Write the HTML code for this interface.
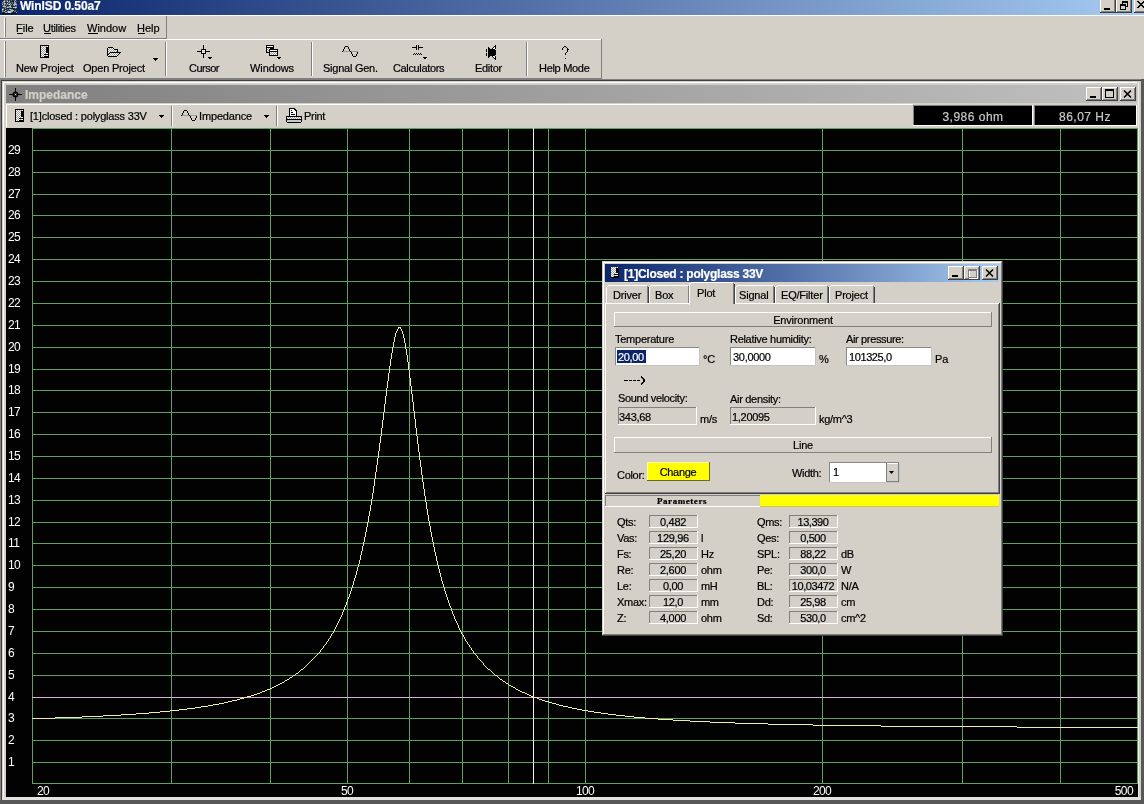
<!DOCTYPE html>
<html><head><meta charset="utf-8"><style>
html,body{margin:0;padding:0;}
body{width:1144px;height:804px;overflow:hidden;position:relative;background:#D4D0C8;font-family:"Liberation Sans",sans-serif;}
div,span{position:absolute;box-sizing:border-box;}
span{white-space:nowrap;line-height:20px;-webkit-text-stroke:0.2px currentColor;}
#root{left:0;top:0;width:1144px;height:804px;overflow:hidden;background:#D4D0C8;will-change:transform;}
</style></head><body><div id="root">
<div style="left:0px;top:0px;width:1144px;height:15px;background:linear-gradient(to right,#0A246A,#A6CAF0);"></div><svg style="position:absolute;left:2px;top:0px;" width="15" height="14" viewBox="0 0 15 14" shape-rendering="crispEdges"><rect x="0" y="0" width="1" height="1" fill="#1C2838"/><rect x="1" y="0" width="1" height="1" fill="#1C2838"/><rect x="2" y="0" width="1" height="1" fill="#9AAAB4"/><rect x="3" y="0" width="1" height="1" fill="#1C2838"/><rect x="4" y="0" width="1" height="1" fill="#5A6A78"/><rect x="5" y="0" width="1" height="1" fill="#5A6A78"/><rect x="6" y="0" width="1" height="1" fill="#1C2838"/><rect x="7" y="0" width="1" height="1" fill="#5A6A78"/><rect x="8" y="0" width="1" height="1" fill="#1C2838"/><rect x="9" y="0" width="1" height="1" fill="#5A6A78"/><rect x="10" y="0" width="1" height="1" fill="#1C2838"/><rect x="11" y="0" width="1" height="1" fill="#1C2838"/><rect x="12" y="0" width="1" height="1" fill="#5A6A78"/><rect x="13" y="0" width="1" height="1" fill="#9AAAB4"/><rect x="14" y="0" width="1" height="1" fill="#1C2838"/><rect x="0" y="1" width="1" height="1" fill="#1C2838"/><rect x="1" y="1" width="1" height="1" fill="#9AAAB4"/><rect x="2" y="1" width="1" height="1" fill="#C8D4DA"/><rect x="3" y="1" width="1" height="1" fill="#5A6A78"/><rect x="4" y="1" width="1" height="1" fill="#5A6A78"/><rect x="5" y="1" width="1" height="1" fill="#C8D4DA"/><rect x="6" y="1" width="1" height="1" fill="#1C2838"/><rect x="7" y="1" width="1" height="1" fill="#C8D4DA"/><rect x="8" y="1" width="1" height="1" fill="#1C2838"/><rect x="9" y="1" width="1" height="1" fill="#1C2838"/><rect x="10" y="1" width="1" height="1" fill="#1C2838"/><rect x="11" y="1" width="1" height="1" fill="#1C2838"/><rect x="12" y="1" width="1" height="1" fill="#9AAAB4"/><rect x="13" y="1" width="1" height="1" fill="#1C2838"/><rect x="14" y="1" width="1" height="1" fill="#5A6A78"/><rect x="0" y="2" width="1" height="1" fill="#9AAAB4"/><rect x="1" y="2" width="1" height="1" fill="#5A6A78"/><rect x="2" y="2" width="1" height="1" fill="#5A6A78"/><rect x="3" y="2" width="1" height="1" fill="#1C2838"/><rect x="4" y="2" width="1" height="1" fill="#1C2838"/><rect x="5" y="2" width="1" height="1" fill="#1C2838"/><rect x="6" y="2" width="1" height="1" fill="#9AAAB4"/><rect x="7" y="2" width="1" height="1" fill="#5A6A78"/><rect x="8" y="2" width="1" height="1" fill="#1C2838"/><rect x="9" y="2" width="1" height="1" fill="#5A6A78"/><rect x="10" y="2" width="1" height="1" fill="#5A6A78"/><rect x="11" y="2" width="1" height="1" fill="#1C2838"/><rect x="12" y="2" width="1" height="1" fill="#9AAAB4"/><rect x="13" y="2" width="1" height="1" fill="#9AAAB4"/><rect x="14" y="2" width="1" height="1" fill="#1C2838"/><rect x="0" y="3" width="1" height="1" fill="#5A6A78"/><rect x="1" y="3" width="1" height="1" fill="#5A6A78"/><rect x="2" y="3" width="1" height="1" fill="#C8D4DA"/><rect x="3" y="3" width="1" height="1" fill="#9AAAB4"/><rect x="4" y="3" width="1" height="1" fill="#1C2838"/><rect x="5" y="3" width="1" height="1" fill="#C8D4DA"/><rect x="6" y="3" width="1" height="1" fill="#1C2838"/><rect x="7" y="3" width="1" height="1" fill="#5A6A78"/><rect x="8" y="3" width="1" height="1" fill="#9AAAB4"/><rect x="9" y="3" width="1" height="1" fill="#1C2838"/><rect x="10" y="3" width="1" height="1" fill="#5A6A78"/><rect x="11" y="3" width="1" height="1" fill="#1C2838"/><rect x="12" y="3" width="1" height="1" fill="#9AAAB4"/><rect x="13" y="3" width="1" height="1" fill="#9AAAB4"/><rect x="14" y="3" width="1" height="1" fill="#5A6A78"/><rect x="0" y="4" width="1" height="1" fill="#C8D4DA"/><rect x="1" y="4" width="1" height="1" fill="#1C2838"/><rect x="2" y="4" width="1" height="1" fill="#9AAAB4"/><rect x="3" y="4" width="1" height="1" fill="#5A6A78"/><rect x="4" y="4" width="1" height="1" fill="#5A6A78"/><rect x="5" y="4" width="1" height="1" fill="#5A6A78"/><rect x="6" y="4" width="1" height="1" fill="#9AAAB4"/><rect x="7" y="4" width="1" height="1" fill="#C8D4DA"/><rect x="8" y="4" width="1" height="1" fill="#5A6A78"/><rect x="9" y="4" width="1" height="1" fill="#9AAAB4"/><rect x="10" y="4" width="1" height="1" fill="#1C2838"/><rect x="11" y="4" width="1" height="1" fill="#9AAAB4"/><rect x="12" y="4" width="1" height="1" fill="#9AAAB4"/><rect x="13" y="4" width="1" height="1" fill="#C8D4DA"/><rect x="14" y="4" width="1" height="1" fill="#9AAAB4"/><rect x="0" y="5" width="1" height="1" fill="#1C2838"/><rect x="1" y="5" width="1" height="1" fill="#5A6A78"/><rect x="2" y="5" width="1" height="1" fill="#9AAAB4"/><rect x="3" y="5" width="1" height="1" fill="#1C2838"/><rect x="4" y="5" width="1" height="1" fill="#5A6A78"/><rect x="5" y="5" width="1" height="1" fill="#1C2838"/><rect x="6" y="5" width="1" height="1" fill="#1C2838"/><rect x="7" y="5" width="1" height="1" fill="#1C2838"/><rect x="8" y="5" width="1" height="1" fill="#9AAAB4"/><rect x="9" y="5" width="1" height="1" fill="#1C2838"/><rect x="10" y="5" width="1" height="1" fill="#1C2838"/><rect x="11" y="5" width="1" height="1" fill="#5A6A78"/><rect x="12" y="5" width="1" height="1" fill="#C8D4DA"/><rect x="13" y="5" width="1" height="1" fill="#1C2838"/><rect x="14" y="5" width="1" height="1" fill="#5A6A78"/><rect x="0" y="6" width="1" height="1" fill="#5A6A78"/><rect x="1" y="6" width="1" height="1" fill="#C8D4DA"/><rect x="2" y="6" width="1" height="1" fill="#9AAAB4"/><rect x="3" y="6" width="1" height="1" fill="#C8D4DA"/><rect x="4" y="6" width="1" height="1" fill="#1C2838"/><rect x="5" y="6" width="1" height="1" fill="#5A6A78"/><rect x="6" y="6" width="1" height="1" fill="#5A6A78"/><rect x="7" y="6" width="1" height="1" fill="#C8D4DA"/><rect x="8" y="6" width="1" height="1" fill="#C8D4DA"/><rect x="9" y="6" width="1" height="1" fill="#1C2838"/><rect x="10" y="6" width="1" height="1" fill="#1C2838"/><rect x="11" y="6" width="1" height="1" fill="#1C2838"/><rect x="12" y="6" width="1" height="1" fill="#1C2838"/><rect x="13" y="6" width="1" height="1" fill="#5A6A78"/><rect x="14" y="6" width="1" height="1" fill="#5A6A78"/><rect x="0" y="7" width="1" height="1" fill="#1C2838"/><rect x="1" y="7" width="1" height="1" fill="#1C2838"/><rect x="2" y="7" width="1" height="1" fill="#5A6A78"/><rect x="3" y="7" width="1" height="1" fill="#5A6A78"/><rect x="4" y="7" width="1" height="1" fill="#5A6A78"/><rect x="5" y="7" width="1" height="1" fill="#C8D4DA"/><rect x="6" y="7" width="1" height="1" fill="#9AAAB4"/><rect x="7" y="7" width="1" height="1" fill="#5A6A78"/><rect x="8" y="7" width="1" height="1" fill="#9AAAB4"/><rect x="9" y="7" width="1" height="1" fill="#9AAAB4"/><rect x="10" y="7" width="1" height="1" fill="#1C2838"/><rect x="11" y="7" width="1" height="1" fill="#C8D4DA"/><rect x="12" y="7" width="1" height="1" fill="#9AAAB4"/><rect x="13" y="7" width="1" height="1" fill="#C8D4DA"/><rect x="14" y="7" width="1" height="1" fill="#9AAAB4"/><rect x="0" y="8" width="1" height="1" fill="#5A6A78"/><rect x="1" y="8" width="1" height="1" fill="#5A6A78"/><rect x="2" y="8" width="1" height="1" fill="#1C2838"/><rect x="3" y="8" width="1" height="1" fill="#9AAAB4"/><rect x="4" y="8" width="1" height="1" fill="#1C2838"/><rect x="5" y="8" width="1" height="1" fill="#1C2838"/><rect x="6" y="8" width="1" height="1" fill="#1C2838"/><rect x="7" y="8" width="1" height="1" fill="#1C2838"/><rect x="8" y="8" width="1" height="1" fill="#1C2838"/><rect x="9" y="8" width="1" height="1" fill="#1C2838"/><rect x="10" y="8" width="1" height="1" fill="#1C2838"/><rect x="11" y="8" width="1" height="1" fill="#1C2838"/><rect x="12" y="8" width="1" height="1" fill="#1C2838"/><rect x="13" y="8" width="1" height="1" fill="#5A6A78"/><rect x="14" y="8" width="1" height="1" fill="#1C2838"/><rect x="0" y="9" width="1" height="1" fill="#C8D4DA"/><rect x="1" y="9" width="1" height="1" fill="#9AAAB4"/><rect x="2" y="9" width="1" height="1" fill="#1C2838"/><rect x="3" y="9" width="1" height="1" fill="#1C2838"/><rect x="4" y="9" width="1" height="1" fill="#1C2838"/><rect x="5" y="9" width="1" height="1" fill="#5A6A78"/><rect x="6" y="9" width="1" height="1" fill="#1C2838"/><rect x="7" y="9" width="1" height="1" fill="#9AAAB4"/><rect x="8" y="9" width="1" height="1" fill="#C8D4DA"/><rect x="9" y="9" width="1" height="1" fill="#5A6A78"/><rect x="10" y="9" width="1" height="1" fill="#5A6A78"/><rect x="11" y="9" width="1" height="1" fill="#1C2838"/><rect x="12" y="9" width="1" height="1" fill="#1C2838"/><rect x="13" y="9" width="1" height="1" fill="#1C2838"/><rect x="14" y="9" width="1" height="1" fill="#1C2838"/><rect x="0" y="10" width="1" height="1" fill="#9AAAB4"/><rect x="1" y="10" width="1" height="1" fill="#1C2838"/><rect x="2" y="10" width="1" height="1" fill="#1C2838"/><rect x="3" y="10" width="1" height="1" fill="#C8D4DA"/><rect x="4" y="10" width="1" height="1" fill="#5A6A78"/><rect x="5" y="10" width="1" height="1" fill="#1C2838"/><rect x="6" y="10" width="1" height="1" fill="#5A6A78"/><rect x="7" y="10" width="1" height="1" fill="#1C2838"/><rect x="8" y="10" width="1" height="1" fill="#5A6A78"/><rect x="9" y="10" width="1" height="1" fill="#C8D4DA"/><rect x="10" y="10" width="1" height="1" fill="#C8D4DA"/><rect x="11" y="10" width="1" height="1" fill="#9AAAB4"/><rect x="12" y="10" width="1" height="1" fill="#1C2838"/><rect x="13" y="10" width="1" height="1" fill="#5A6A78"/><rect x="14" y="10" width="1" height="1" fill="#1C2838"/><rect x="0" y="11" width="1" height="1" fill="#9AAAB4"/><rect x="1" y="11" width="1" height="1" fill="#5A6A78"/><rect x="2" y="11" width="1" height="1" fill="#9AAAB4"/><rect x="3" y="11" width="1" height="1" fill="#1C2838"/><rect x="4" y="11" width="1" height="1" fill="#1C2838"/><rect x="5" y="11" width="1" height="1" fill="#9AAAB4"/><rect x="6" y="11" width="1" height="1" fill="#C8D4DA"/><rect x="7" y="11" width="1" height="1" fill="#C8D4DA"/><rect x="8" y="11" width="1" height="1" fill="#9AAAB4"/><rect x="9" y="11" width="1" height="1" fill="#9AAAB4"/><rect x="10" y="11" width="1" height="1" fill="#9AAAB4"/><rect x="11" y="11" width="1" height="1" fill="#1C2838"/><rect x="12" y="11" width="1" height="1" fill="#5A6A78"/><rect x="13" y="11" width="1" height="1" fill="#5A6A78"/><rect x="14" y="11" width="1" height="1" fill="#1C2838"/><rect x="0" y="12" width="1" height="1" fill="#1C2838"/><rect x="1" y="12" width="1" height="1" fill="#1C2838"/><rect x="2" y="12" width="1" height="1" fill="#1C2838"/><rect x="3" y="12" width="1" height="1" fill="#9AAAB4"/><rect x="4" y="12" width="1" height="1" fill="#C8D4DA"/><rect x="5" y="12" width="1" height="1" fill="#5A6A78"/><rect x="6" y="12" width="1" height="1" fill="#C8D4DA"/><rect x="7" y="12" width="1" height="1" fill="#C8D4DA"/><rect x="8" y="12" width="1" height="1" fill="#C8D4DA"/><rect x="9" y="12" width="1" height="1" fill="#5A6A78"/><rect x="10" y="12" width="1" height="1" fill="#1C2838"/><rect x="11" y="12" width="1" height="1" fill="#1C2838"/><rect x="12" y="12" width="1" height="1" fill="#1C2838"/><rect x="13" y="12" width="1" height="1" fill="#1C2838"/><rect x="14" y="12" width="1" height="1" fill="#9AAAB4"/><rect x="0" y="13" width="1" height="1" fill="#C8D4DA"/><rect x="1" y="13" width="1" height="1" fill="#9AAAB4"/><rect x="2" y="13" width="1" height="1" fill="#5A6A78"/><rect x="3" y="13" width="1" height="1" fill="#9AAAB4"/><rect x="4" y="13" width="1" height="1" fill="#9AAAB4"/><rect x="5" y="13" width="1" height="1" fill="#1C2838"/><rect x="6" y="13" width="1" height="1" fill="#9AAAB4"/><rect x="7" y="13" width="1" height="1" fill="#C8D4DA"/><rect x="8" y="13" width="1" height="1" fill="#9AAAB4"/><rect x="9" y="13" width="1" height="1" fill="#9AAAB4"/><rect x="10" y="13" width="1" height="1" fill="#5A6A78"/><rect x="11" y="13" width="1" height="1" fill="#1C2838"/><rect x="12" y="13" width="1" height="1" fill="#9AAAB4"/><rect x="13" y="13" width="1" height="1" fill="#1C2838"/><rect x="14" y="13" width="1" height="1" fill="#9AAAB4"/><rect x="0" y="13" width="15" height="1" fill="#101018"/></svg><span style="left:20px;top:-4px;font-size:12px;font-weight:bold;color:#fff;letter-spacing:-0.1px;">WinISD 0.50a7</span><div style="left:1100px;top:-2px;width:16px;height:15px;background:#D4D0C8;"></div><div style="left:1100px;top:-2px;width:15px;height:1px;background:#FFFFFF;"></div><div style="left:1100px;top:-2px;width:1px;height:14px;background:#FFFFFF;"></div><div style="left:1101px;top:11px;width:14px;height:1px;background:#808080;"></div><div style="left:1114px;top:-2px;width:1px;height:14px;background:#808080;"></div><div style="left:1100px;top:12px;width:16px;height:1px;background:#404040;"></div><div style="left:1115px;top:-2px;width:1px;height:15px;background:#404040;"></div><div style="left:1104px;top:8px;width:6px;height:2px;background:#000;"></div><div style="left:1116px;top:-2px;width:16px;height:15px;background:#D4D0C8;"></div><div style="left:1116px;top:-2px;width:15px;height:1px;background:#FFFFFF;"></div><div style="left:1116px;top:-2px;width:1px;height:14px;background:#FFFFFF;"></div><div style="left:1117px;top:11px;width:14px;height:1px;background:#808080;"></div><div style="left:1130px;top:-2px;width:1px;height:14px;background:#808080;"></div><div style="left:1116px;top:12px;width:16px;height:1px;background:#404040;"></div><div style="left:1131px;top:-2px;width:1px;height:15px;background:#404040;"></div><svg style="position:absolute;left:1120px;top:1px;" width="8" height="9" viewBox="0 0 8 9" shape-rendering="crispEdges"><rect x="2" y="0" width="6" height="1" fill="#000"/><rect x="2" y="1" width="6" height="1" fill="#000"/><rect x="2" y="2" width="1" height="1" fill="#000"/><rect x="7" y="2" width="1" height="1" fill="#000"/><rect x="0" y="3" width="6" height="1" fill="#000"/><rect x="7" y="3" width="1" height="1" fill="#000"/><rect x="0" y="4" width="6" height="1" fill="#000"/><rect x="7" y="4" width="1" height="1" fill="#000"/><rect x="0" y="5" width="1" height="1" fill="#000"/><rect x="5" y="5" width="3" height="1" fill="#000"/><rect x="0" y="6" width="1" height="1" fill="#000"/><rect x="5" y="6" width="1" height="1" fill="#000"/><rect x="0" y="7" width="1" height="1" fill="#000"/><rect x="5" y="7" width="1" height="1" fill="#000"/><rect x="0" y="8" width="6" height="1" fill="#000"/></svg><div style="left:1134px;top:-2px;width:16px;height:15px;background:#D4D0C8;"></div><div style="left:1134px;top:-2px;width:15px;height:1px;background:#FFFFFF;"></div><div style="left:1134px;top:-2px;width:1px;height:14px;background:#FFFFFF;"></div><div style="left:1135px;top:11px;width:14px;height:1px;background:#808080;"></div><div style="left:1148px;top:-2px;width:1px;height:14px;background:#808080;"></div><div style="left:1134px;top:12px;width:16px;height:1px;background:#404040;"></div><div style="left:1149px;top:-2px;width:1px;height:15px;background:#404040;"></div><svg style="position:absolute;left:1137px;top:1px;" width="8" height="7" viewBox="0 0 8 7" shape-rendering="crispEdges"><rect x="0" y="0" width="2" height="1" fill="#000"/><rect x="6" y="0" width="2" height="1" fill="#000"/><rect x="1" y="1" width="2" height="1" fill="#000"/><rect x="5" y="1" width="2" height="1" fill="#000"/><rect x="2" y="2" width="4" height="1" fill="#000"/><rect x="3" y="3" width="2" height="1" fill="#000"/><rect x="2" y="4" width="4" height="1" fill="#000"/><rect x="1" y="5" width="2" height="1" fill="#000"/><rect x="5" y="5" width="2" height="1" fill="#000"/><rect x="0" y="6" width="2" height="1" fill="#000"/><rect x="6" y="6" width="2" height="1" fill="#000"/></svg><div style="left:0px;top:15px;width:1144px;height:1px;background:#FFFFFF;"></div><div style="left:0px;top:38px;width:167px;height:1px;background:#808080;"></div><div style="left:166px;top:16px;width:1px;height:23px;background:#808080;"></div><div style="left:4px;top:18px;width:1px;height:19px;background:#FFFFFF;"></div><div style="left:5px;top:18px;width:1px;height:19px;background:#808080;"></div><span style="left:16px;top:18px;font-size:11px;font-weight:normal;color:#000;">File</span><div style="left:17px;top:33px;width:6px;height:1px;background:#000;"></div><span style="left:43px;top:18px;font-size:11px;font-weight:normal;color:#000;letter-spacing:-0.3px;">Utilities</span><div style="left:44px;top:33px;width:7px;height:1px;background:#000;"></div><span style="left:87px;top:18px;font-size:11px;font-weight:normal;color:#000;">Window</span><div style="left:88px;top:33px;width:10px;height:1px;background:#000;"></div><span style="left:137px;top:18px;font-size:11px;font-weight:normal;color:#000;">Help</span><div style="left:138px;top:33px;width:7px;height:1px;background:#000;"></div><div style="left:0px;top:39px;width:602px;height:1px;background:#FFFFFF;"></div><div style="left:0px;top:78px;width:602px;height:1px;background:#808080;"></div><div style="left:601px;top:39px;width:1px;height:40px;background:#808080;"></div><div style="left:4px;top:41px;width:1px;height:36px;background:#FFFFFF;"></div><div style="left:5px;top:41px;width:1px;height:36px;background:#808080;"></div><div style="left:165px;top:42px;width:1px;height:34px;background:#808080;"></div><div style="left:166px;top:42px;width:1px;height:34px;background:#FFFFFF;"></div><div style="left:311px;top:42px;width:1px;height:34px;background:#808080;"></div><div style="left:312px;top:42px;width:1px;height:34px;background:#FFFFFF;"></div><div style="left:526px;top:42px;width:1px;height:34px;background:#808080;"></div><div style="left:527px;top:42px;width:1px;height:34px;background:#FFFFFF;"></div><span style="left:16px;top:58px;font-size:11px;font-weight:normal;color:#000;letter-spacing:-0.15px;">New Project</span><span style="left:83px;top:58px;font-size:11px;font-weight:normal;color:#000;letter-spacing:-0.2px;">Open Project</span><span style="left:189px;top:58px;font-size:11px;font-weight:normal;color:#000;letter-spacing:-0.5px;">Cursor</span><span style="left:250px;top:58px;font-size:11px;font-weight:normal;color:#000;letter-spacing:-0.1px;">Windows</span><span style="left:323px;top:58px;font-size:11px;font-weight:normal;color:#000;letter-spacing:-0.25px;">Signal Gen.</span><span style="left:393px;top:58px;font-size:11px;font-weight:normal;color:#000;letter-spacing:-0.35px;">Calculators</span><span style="left:475px;top:58px;font-size:11px;font-weight:normal;color:#000;letter-spacing:-0.3px;">Editor</span><span style="left:539px;top:58px;font-size:11px;font-weight:normal;color:#000;letter-spacing:-0.3px;">Help Mode</span><svg style="position:absolute;left:153px;top:58px;" width="5" height="3" viewBox="0 0 5 3" shape-rendering="crispEdges"><rect x="0" y="0" width="5" height="1" fill="#000"/><rect x="1" y="1" width="3" height="1" fill="#000"/><rect x="2" y="2" width="1" height="1" fill="#000"/></svg><svg style="position:absolute;left:40px;top:45px;" width="9" height="13" viewBox="0 0 9 13" shape-rendering="crispEdges"><rect x="0" y="0" width="9" height="1" fill="#000"/><rect x="0" y="1" width="1" height="1" fill="#000"/><rect x="1" y="1" width="1" height="1" fill="#FFFFFF"/><rect x="2" y="1" width="1" height="1" fill="#9C9C9C"/><rect x="3" y="1" width="1" height="1" fill="#FFFFFF"/><rect x="4" y="1" width="1" height="1" fill="#9C9C9C"/><rect x="5" y="1" width="1" height="1" fill="#FFFFFF"/><rect x="6" y="1" width="1" height="1" fill="#9C9C9C"/><rect x="7" y="1" width="1" height="1" fill="#FFFFFF"/><rect x="8" y="1" width="1" height="1" fill="#000"/><rect x="0" y="2" width="1" height="1" fill="#000"/><rect x="1" y="2" width="1" height="1" fill="#9C9C9C"/><rect x="2" y="2" width="1" height="1" fill="#FFFFFF"/><rect x="3" y="2" width="1" height="1" fill="#9C9C9C"/><rect x="4" y="2" width="1" height="1" fill="#FFFFFF"/><rect x="5" y="2" width="1" height="1" fill="#9C9C9C"/><rect x="6" y="2" width="3" height="1" fill="#000"/><rect x="0" y="3" width="1" height="1" fill="#000"/><rect x="1" y="3" width="1" height="1" fill="#FFFFFF"/><rect x="2" y="3" width="1" height="1" fill="#9C9C9C"/><rect x="3" y="3" width="1" height="1" fill="#FFFFFF"/><rect x="4" y="3" width="1" height="1" fill="#9C9C9C"/><rect x="5" y="3" width="1" height="1" fill="#FFFFFF"/><rect x="6" y="3" width="3" height="1" fill="#000"/><rect x="0" y="4" width="1" height="1" fill="#000"/><rect x="1" y="4" width="1" height="1" fill="#9C9C9C"/><rect x="2" y="4" width="1" height="1" fill="#FFFFFF"/><rect x="3" y="4" width="1" height="1" fill="#9C9C9C"/><rect x="4" y="4" width="1" height="1" fill="#FFFFFF"/><rect x="5" y="4" width="1" height="1" fill="#9C9C9C"/><rect x="6" y="4" width="3" height="1" fill="#000"/><rect x="0" y="5" width="1" height="1" fill="#000"/><rect x="1" y="5" width="1" height="1" fill="#FFFFFF"/><rect x="2" y="5" width="1" height="1" fill="#9C9C9C"/><rect x="3" y="5" width="1" height="1" fill="#FFFFFF"/><rect x="4" y="5" width="1" height="1" fill="#9C9C9C"/><rect x="5" y="5" width="1" height="1" fill="#FFFFFF"/><rect x="6" y="5" width="3" height="1" fill="#000"/><rect x="0" y="6" width="1" height="1" fill="#000"/><rect x="1" y="6" width="1" height="1" fill="#9C9C9C"/><rect x="2" y="6" width="1" height="1" fill="#FFFFFF"/><rect x="3" y="6" width="1" height="1" fill="#9C9C9C"/><rect x="4" y="6" width="1" height="1" fill="#FFFFFF"/><rect x="5" y="6" width="1" height="1" fill="#9C9C9C"/><rect x="6" y="6" width="3" height="1" fill="#000"/><rect x="0" y="7" width="1" height="1" fill="#000"/><rect x="1" y="7" width="1" height="1" fill="#FFFFFF"/><rect x="2" y="7" width="1" height="1" fill="#9C9C9C"/><rect x="3" y="7" width="1" height="1" fill="#FFFFFF"/><rect x="4" y="7" width="1" height="1" fill="#9C9C9C"/><rect x="5" y="7" width="1" height="1" fill="#FFFFFF"/><rect x="6" y="7" width="3" height="1" fill="#000"/><rect x="0" y="8" width="1" height="1" fill="#000"/><rect x="1" y="8" width="1" height="1" fill="#9C9C9C"/><rect x="2" y="8" width="1" height="1" fill="#FFFFFF"/><rect x="3" y="8" width="1" height="1" fill="#9C9C9C"/><rect x="4" y="8" width="1" height="1" fill="#FFFFFF"/><rect x="5" y="8" width="1" height="1" fill="#9C9C9C"/><rect x="6" y="8" width="2" height="1" fill="#FFFFFF"/><rect x="8" y="8" width="1" height="1" fill="#000"/><rect x="0" y="9" width="1" height="1" fill="#000"/><rect x="1" y="9" width="1" height="1" fill="#FFFFFF"/><rect x="2" y="9" width="1" height="1" fill="#9C9C9C"/><rect x="3" y="9" width="1" height="1" fill="#FFFFFF"/><rect x="4" y="9" width="5" height="1" fill="#000"/><rect x="0" y="10" width="1" height="1" fill="#000"/><rect x="1" y="10" width="1" height="1" fill="#9C9C9C"/><rect x="2" y="10" width="1" height="1" fill="#FFFFFF"/><rect x="3" y="10" width="1" height="1" fill="#9C9C9C"/><rect x="4" y="10" width="1" height="1" fill="#FFFFFF"/><rect x="5" y="10" width="1" height="1" fill="#9C9C9C"/><rect x="6" y="10" width="2" height="1" fill="#FFFFFF"/><rect x="8" y="10" width="1" height="1" fill="#000"/><rect x="0" y="11" width="1" height="1" fill="#000"/><rect x="1" y="11" width="1" height="1" fill="#FFFFFF"/><rect x="2" y="11" width="1" height="1" fill="#9C9C9C"/><rect x="3" y="11" width="1" height="1" fill="#FFFFFF"/><rect x="4" y="11" width="5" height="1" fill="#000"/><rect x="0" y="12" width="9" height="1" fill="#000"/></svg><svg style="position:absolute;left:107px;top:47px;" width="14" height="10" viewBox="0 0 14 10" shape-rendering="crispEdges"><rect x="1" y="0" width="5" height="1" fill="#000"/><rect x="0" y="1" width="1" height="1" fill="#000"/><rect x="1" y="1" width="1" height="1" fill="#FFFFFF"/><rect x="2" y="1" width="1" height="1" fill="#9C9C9C"/><rect x="3" y="1" width="1" height="1" fill="#FFFFFF"/><rect x="4" y="1" width="1" height="1" fill="#9C9C9C"/><rect x="5" y="1" width="1" height="1" fill="#FFFFFF"/><rect x="6" y="1" width="1" height="1" fill="#000"/><rect x="0" y="2" width="1" height="1" fill="#000"/><rect x="1" y="2" width="1" height="1" fill="#9C9C9C"/><rect x="2" y="2" width="1" height="1" fill="#FFFFFF"/><rect x="3" y="2" width="1" height="1" fill="#9C9C9C"/><rect x="4" y="2" width="1" height="1" fill="#FFFFFF"/><rect x="5" y="2" width="1" height="1" fill="#9C9C9C"/><rect x="6" y="2" width="1" height="1" fill="#FFFFFF"/><rect x="7" y="2" width="4" height="1" fill="#000"/><rect x="0" y="3" width="1" height="1" fill="#000"/><rect x="1" y="3" width="1" height="1" fill="#FFFFFF"/><rect x="2" y="3" width="1" height="1" fill="#9C9C9C"/><rect x="3" y="3" width="1" height="1" fill="#FFFFFF"/><rect x="4" y="3" width="1" height="1" fill="#9C9C9C"/><rect x="5" y="3" width="1" height="1" fill="#FFFFFF"/><rect x="6" y="3" width="1" height="1" fill="#9C9C9C"/><rect x="7" y="3" width="1" height="1" fill="#FFFFFF"/><rect x="8" y="3" width="1" height="1" fill="#9C9C9C"/><rect x="9" y="3" width="1" height="1" fill="#FFFFFF"/><rect x="10" y="3" width="1" height="1" fill="#000"/><rect x="0" y="4" width="1" height="1" fill="#000"/><rect x="1" y="4" width="1" height="1" fill="#9C9C9C"/><rect x="2" y="4" width="1" height="1" fill="#FFFFFF"/><rect x="3" y="4" width="1" height="1" fill="#9C9C9C"/><rect x="4" y="4" width="1" height="1" fill="#FFFFFF"/><rect x="5" y="4" width="1" height="1" fill="#9C9C9C"/><rect x="6" y="4" width="1" height="1" fill="#FFFFFF"/><rect x="7" y="4" width="1" height="1" fill="#9C9C9C"/><rect x="8" y="4" width="1" height="1" fill="#FFFFFF"/><rect x="9" y="4" width="1" height="1" fill="#9C9C9C"/><rect x="10" y="4" width="1" height="1" fill="#000"/><rect x="0" y="5" width="1" height="1" fill="#000"/><rect x="1" y="5" width="1" height="1" fill="#FFFFFF"/><rect x="2" y="5" width="1" height="1" fill="#9C9C9C"/><rect x="3" y="5" width="11" height="1" fill="#000"/><rect x="0" y="6" width="1" height="1" fill="#000"/><rect x="1" y="6" width="1" height="1" fill="#9C9C9C"/><rect x="2" y="6" width="1" height="1" fill="#000"/><rect x="3" y="6" width="1" height="1" fill="#FFFFFF"/><rect x="4" y="6" width="1" height="1" fill="#9C9C9C"/><rect x="5" y="6" width="1" height="1" fill="#FFFFFF"/><rect x="6" y="6" width="1" height="1" fill="#9C9C9C"/><rect x="7" y="6" width="1" height="1" fill="#FFFFFF"/><rect x="8" y="6" width="1" height="1" fill="#9C9C9C"/><rect x="9" y="6" width="1" height="1" fill="#FFFFFF"/><rect x="10" y="6" width="1" height="1" fill="#9C9C9C"/><rect x="11" y="6" width="1" height="1" fill="#FFFFFF"/><rect x="12" y="6" width="1" height="1" fill="#000"/><rect x="0" y="7" width="2" height="1" fill="#000"/><rect x="2" y="7" width="1" height="1" fill="#FFFFFF"/><rect x="3" y="7" width="1" height="1" fill="#9C9C9C"/><rect x="4" y="7" width="1" height="1" fill="#FFFFFF"/><rect x="5" y="7" width="1" height="1" fill="#9C9C9C"/><rect x="6" y="7" width="1" height="1" fill="#FFFFFF"/><rect x="7" y="7" width="1" height="1" fill="#9C9C9C"/><rect x="8" y="7" width="1" height="1" fill="#FFFFFF"/><rect x="9" y="7" width="1" height="1" fill="#9C9C9C"/><rect x="10" y="7" width="1" height="1" fill="#FFFFFF"/><rect x="11" y="7" width="1" height="1" fill="#000"/><rect x="0" y="8" width="1" height="1" fill="#000"/><rect x="1" y="8" width="1" height="1" fill="#FFFFFF"/><rect x="2" y="8" width="1" height="1" fill="#9C9C9C"/><rect x="3" y="8" width="1" height="1" fill="#FFFFFF"/><rect x="4" y="8" width="1" height="1" fill="#9C9C9C"/><rect x="5" y="8" width="1" height="1" fill="#FFFFFF"/><rect x="6" y="8" width="1" height="1" fill="#9C9C9C"/><rect x="7" y="8" width="1" height="1" fill="#FFFFFF"/><rect x="8" y="8" width="1" height="1" fill="#9C9C9C"/><rect x="9" y="8" width="1" height="1" fill="#FFFFFF"/><rect x="10" y="8" width="1" height="1" fill="#000"/><rect x="1" y="9" width="9" height="1" fill="#000"/></svg><svg style="position:absolute;left:197px;top:45px;" width="13" height="13" viewBox="0 0 13 13" shape-rendering="crispEdges"><rect x="6" y="0" width="1" height="1" fill="#000"/><rect x="6" y="1" width="1" height="1" fill="#000"/><rect x="6" y="2" width="1" height="1" fill="#000"/><rect x="6" y="3" width="1" height="1" fill="#000"/><rect x="4" y="4" width="5" height="1" fill="#000"/><rect x="4" y="5" width="1" height="1" fill="#000"/><rect x="5" y="5" width="1" height="1" fill="#FFFFFF"/><rect x="7" y="5" width="1" height="1" fill="#FFFFFF"/><rect x="8" y="5" width="1" height="1" fill="#000"/><rect x="0" y="6" width="5" height="1" fill="#000"/><rect x="8" y="6" width="5" height="1" fill="#000"/><rect x="4" y="7" width="1" height="1" fill="#000"/><rect x="5" y="7" width="1" height="1" fill="#FFFFFF"/><rect x="7" y="7" width="1" height="1" fill="#FFFFFF"/><rect x="8" y="7" width="1" height="1" fill="#000"/><rect x="4" y="8" width="5" height="1" fill="#000"/><rect x="6" y="9" width="1" height="1" fill="#000"/><rect x="6" y="10" width="1" height="1" fill="#000"/><rect x="6" y="11" width="1" height="1" fill="#000"/><rect x="6" y="12" width="1" height="1" fill="#000"/></svg><svg style="position:absolute;left:208px;top:57px;" width="4" height="2" viewBox="0 0 4 2" shape-rendering="crispEdges"><rect x="0" y="0" width="4" height="1" fill="#000"/><rect x="1" y="1" width="2" height="1" fill="#000"/></svg><svg style="position:absolute;left:266px;top:45px;" width="12" height="11" viewBox="0 0 12 11" shape-rendering="crispEdges"><rect x="0" y="0" width="8" height="1" fill="#000"/><rect x="0" y="1" width="1" height="1" fill="#000"/><rect x="1" y="1" width="6" height="1" fill="#FFFFFF"/><rect x="7" y="1" width="1" height="1" fill="#000"/><rect x="0" y="2" width="8" height="1" fill="#000"/><rect x="0" y="3" width="1" height="1" fill="#000"/><rect x="1" y="3" width="1" height="1" fill="#FFFFFF"/><rect x="2" y="3" width="1" height="1" fill="#9C9C9C"/><rect x="3" y="3" width="1" height="1" fill="#FFFFFF"/><rect x="4" y="3" width="4" height="1" fill="#000"/><rect x="0" y="4" width="1" height="1" fill="#000"/><rect x="1" y="4" width="1" height="1" fill="#9C9C9C"/><rect x="2" y="4" width="1" height="1" fill="#FFFFFF"/><rect x="3" y="4" width="9" height="1" fill="#000"/><rect x="0" y="5" width="1" height="1" fill="#000"/><rect x="1" y="5" width="1" height="1" fill="#FFFFFF"/><rect x="2" y="5" width="1" height="1" fill="#9C9C9C"/><rect x="3" y="5" width="1" height="1" fill="#000"/><rect x="4" y="5" width="7" height="1" fill="#FFFFFF"/><rect x="11" y="5" width="1" height="1" fill="#000"/><rect x="0" y="6" width="1" height="1" fill="#000"/><rect x="1" y="6" width="1" height="1" fill="#9C9C9C"/><rect x="2" y="6" width="1" height="1" fill="#FFFFFF"/><rect x="3" y="6" width="9" height="1" fill="#000"/><rect x="0" y="7" width="4" height="1" fill="#000"/><rect x="4" y="7" width="1" height="1" fill="#FFFFFF"/><rect x="5" y="7" width="1" height="1" fill="#9C9C9C"/><rect x="6" y="7" width="1" height="1" fill="#FFFFFF"/><rect x="7" y="7" width="1" height="1" fill="#9C9C9C"/><rect x="8" y="7" width="1" height="1" fill="#FFFFFF"/><rect x="9" y="7" width="1" height="1" fill="#9C9C9C"/><rect x="10" y="7" width="1" height="1" fill="#FFFFFF"/><rect x="11" y="7" width="1" height="1" fill="#000"/><rect x="3" y="8" width="1" height="1" fill="#000"/><rect x="4" y="8" width="1" height="1" fill="#9C9C9C"/><rect x="5" y="8" width="1" height="1" fill="#FFFFFF"/><rect x="6" y="8" width="1" height="1" fill="#9C9C9C"/><rect x="7" y="8" width="1" height="1" fill="#FFFFFF"/><rect x="8" y="8" width="1" height="1" fill="#9C9C9C"/><rect x="9" y="8" width="1" height="1" fill="#FFFFFF"/><rect x="10" y="8" width="1" height="1" fill="#9C9C9C"/><rect x="11" y="8" width="1" height="1" fill="#000"/><rect x="3" y="9" width="1" height="1" fill="#000"/><rect x="4" y="9" width="1" height="1" fill="#FFFFFF"/><rect x="5" y="9" width="1" height="1" fill="#9C9C9C"/><rect x="6" y="9" width="1" height="1" fill="#FFFFFF"/><rect x="7" y="9" width="1" height="1" fill="#9C9C9C"/><rect x="8" y="9" width="1" height="1" fill="#FFFFFF"/><rect x="9" y="9" width="1" height="1" fill="#9C9C9C"/><rect x="10" y="9" width="1" height="1" fill="#FFFFFF"/><rect x="11" y="9" width="1" height="1" fill="#000"/><rect x="3" y="10" width="9" height="1" fill="#000"/></svg><svg style="position:absolute;left:277px;top:57px;" width="4" height="2" viewBox="0 0 4 2" shape-rendering="crispEdges"><rect x="0" y="0" width="4" height="1" fill="#000"/><rect x="1" y="1" width="2" height="1" fill="#000"/></svg><svg style="position:absolute;left:342px;top:46px;" width="16" height="11" viewBox="0 0 16 11" shape-rendering="crispEdges"><rect x="3" y="0" width="3" height="1" fill="#000"/><rect x="2" y="1" width="1" height="1" fill="#000"/><rect x="6" y="1" width="1" height="1" fill="#000"/><rect x="2" y="2" width="1" height="1" fill="#000"/><rect x="6" y="2" width="1" height="1" fill="#000"/><rect x="1" y="3" width="1" height="1" fill="#000"/><rect x="7" y="3" width="1" height="1" fill="#000"/><rect x="1" y="4" width="1" height="1" fill="#000"/><rect x="7" y="4" width="1" height="1" fill="#000"/><rect x="0" y="5" width="1" height="1" fill="#000"/><rect x="1" y="5" width="7" height="1" fill="#9C9C9C"/><rect x="8" y="5" width="1" height="1" fill="#000"/><rect x="9" y="5" width="7" height="1" fill="#9C9C9C"/><rect x="9" y="6" width="1" height="1" fill="#000"/><rect x="15" y="6" width="1" height="1" fill="#000"/><rect x="9" y="7" width="1" height="1" fill="#000"/><rect x="15" y="7" width="1" height="1" fill="#000"/><rect x="10" y="8" width="1" height="1" fill="#000"/><rect x="14" y="8" width="1" height="1" fill="#000"/><rect x="10" y="9" width="1" height="1" fill="#000"/><rect x="14" y="9" width="1" height="1" fill="#000"/><rect x="11" y="10" width="3" height="1" fill="#000"/></svg><svg style="position:absolute;left:412px;top:45px;" width="11" height="10" viewBox="0 0 11 10" shape-rendering="crispEdges"><rect x="4" y="0" width="1" height="1" fill="#000"/><rect x="6" y="0" width="1" height="1" fill="#000"/><rect x="4" y="1" width="1" height="1" fill="#000"/><rect x="6" y="1" width="1" height="1" fill="#000"/><rect x="0" y="2" width="5" height="1" fill="#000"/><rect x="6" y="2" width="5" height="1" fill="#000"/><rect x="4" y="3" width="1" height="1" fill="#000"/><rect x="6" y="3" width="1" height="1" fill="#000"/><rect x="4" y="4" width="1" height="1" fill="#000"/><rect x="6" y="4" width="1" height="1" fill="#000"/><rect x="2" y="8" width="1" height="1" fill="#000"/><rect x="4" y="8" width="1" height="1" fill="#000"/><rect x="6" y="8" width="1" height="1" fill="#000"/><rect x="8" y="8" width="1" height="1" fill="#000"/><rect x="1" y="9" width="1" height="1" fill="#000"/><rect x="3" y="9" width="1" height="1" fill="#000"/><rect x="5" y="9" width="1" height="1" fill="#000"/><rect x="7" y="9" width="1" height="1" fill="#000"/><rect x="9" y="9" width="1" height="1" fill="#000"/></svg><svg style="position:absolute;left:423px;top:57px;" width="4" height="2" viewBox="0 0 4 2" shape-rendering="crispEdges"><rect x="0" y="0" width="4" height="1" fill="#000"/><rect x="1" y="1" width="2" height="1" fill="#000"/></svg><svg style="position:absolute;left:486px;top:45px;" width="10" height="15" viewBox="0 0 10 15" shape-rendering="crispEdges"><rect x="9" y="0" width="1" height="1" fill="#000"/><rect x="8" y="1" width="2" height="1" fill="#000"/><rect x="2" y="2" width="1" height="1" fill="#000"/><rect x="7" y="2" width="1" height="1" fill="#000"/><rect x="8" y="2" width="1" height="1" fill="#FFFFFF"/><rect x="9" y="2" width="1" height="1" fill="#000"/><rect x="2" y="3" width="2" height="1" fill="#000"/><rect x="6" y="3" width="1" height="1" fill="#000"/><rect x="7" y="3" width="2" height="1" fill="#FFFFFF"/><rect x="9" y="3" width="1" height="1" fill="#000"/><rect x="0" y="4" width="1" height="1" fill="#000"/><rect x="2" y="4" width="7" height="1" fill="#000"/><rect x="0" y="5" width="1" height="1" fill="#000"/><rect x="2" y="5" width="8" height="1" fill="#000"/><rect x="0" y="6" width="1" height="1" fill="#000"/><rect x="2" y="6" width="8" height="1" fill="#000"/><rect x="2" y="7" width="8" height="1" fill="#000"/><rect x="0" y="8" width="1" height="1" fill="#000"/><rect x="2" y="8" width="8" height="1" fill="#000"/><rect x="0" y="9" width="1" height="1" fill="#000"/><rect x="2" y="9" width="8" height="1" fill="#000"/><rect x="0" y="10" width="1" height="1" fill="#000"/><rect x="2" y="10" width="7" height="1" fill="#000"/><rect x="2" y="11" width="2" height="1" fill="#000"/><rect x="6" y="11" width="1" height="1" fill="#000"/><rect x="7" y="11" width="2" height="1" fill="#FFFFFF"/><rect x="9" y="11" width="1" height="1" fill="#000"/><rect x="2" y="12" width="1" height="1" fill="#000"/><rect x="7" y="12" width="1" height="1" fill="#000"/><rect x="8" y="12" width="1" height="1" fill="#FFFFFF"/><rect x="9" y="12" width="1" height="1" fill="#000"/><rect x="8" y="13" width="2" height="1" fill="#000"/><rect x="9" y="14" width="1" height="1" fill="#000"/></svg><svg style="position:absolute;left:562px;top:46px;" width="7" height="13" viewBox="0 0 7 13" shape-rendering="crispEdges"><rect x="2" y="0" width="2" height="1" fill="#000"/><rect x="1" y="1" width="1" height="1" fill="#000"/><rect x="4" y="1" width="1" height="1" fill="#000"/><rect x="0" y="2" width="1" height="1" fill="#000"/><rect x="5" y="2" width="1" height="1" fill="#000"/><rect x="0" y="3" width="1" height="1" fill="#000"/><rect x="5" y="3" width="2" height="1" fill="#000"/><rect x="5" y="4" width="1" height="1" fill="#000"/><rect x="5" y="5" width="1" height="1" fill="#000"/><rect x="4" y="6" width="1" height="1" fill="#000"/><rect x="3" y="7" width="1" height="1" fill="#000"/><rect x="3" y="8" width="1" height="1" fill="#000"/><rect x="3" y="12" width="1" height="1" fill="#000"/></svg><div style="left:0px;top:79px;width:1144px;height:1px;background:#808080;"></div><div style="left:0px;top:80px;width:1144px;height:1px;background:#404040;"></div><div style="left:0px;top:79px;width:1px;height:725px;background:#808080;"></div><div style="left:1px;top:80px;width:1px;height:724px;background:#404040;"></div><div style="left:2px;top:81px;width:1139px;height:1px;background:#D4D0C8;"></div><div style="left:3px;top:82px;width:1137px;height:1px;background:#FFFFFF;"></div><div style="left:2px;top:83px;width:1139px;height:2px;background:#D4D0C8;"></div><div style="left:2px;top:81px;width:1px;height:723px;background:#D4D0C8;"></div><div style="left:3px;top:82px;width:1px;height:722px;background:#FFFFFF;"></div><div style="left:4px;top:83px;width:2px;height:721px;background:#D4D0C8;"></div><div style="left:1137px;top:81px;width:4px;height:723px;background:#D4D0C8;"></div><div style="left:1138px;top:82px;width:1px;height:716px;background:#ECEAE4;"></div><div style="left:1141px;top:79px;width:3px;height:725px;background:#585858;"></div><div style="left:0px;top:800px;width:1141px;height:4px;background:#585858;"></div><div style="left:2px;top:797px;width:1139px;height:3px;background:#E4E2DC;"></div><div style="left:6px;top:85px;width:1131px;height:18px;background:linear-gradient(to right,#808080,#C0C0C0);"></div><svg style="position:absolute;left:8px;top:87px;shape-rendering:auto" width="15" height="15" viewBox="0 0 15 15" shape-rendering="crispEdges"><path d="M7.5 1v13M1 7.5h13" stroke="#000" stroke-width="1"/><circle cx="7.5" cy="7.5" r="2.2" fill="none" stroke="#000" stroke-width="1.6"/><circle cx="7.5" cy="7.5" r="0.8" fill="#ddd"/></svg><span style="left:25px;top:85px;font-size:12px;font-weight:bold;color:#D4D0C8;letter-spacing:0px;">Impedance</span><div style="left:1086px;top:87px;width:16px;height:14px;background:#D4D0C8;"></div><div style="left:1086px;top:87px;width:15px;height:1px;background:#FFFFFF;"></div><div style="left:1086px;top:87px;width:1px;height:13px;background:#FFFFFF;"></div><div style="left:1087px;top:99px;width:14px;height:1px;background:#808080;"></div><div style="left:1100px;top:88px;width:1px;height:12px;background:#808080;"></div><div style="left:1086px;top:100px;width:16px;height:1px;background:#404040;"></div><div style="left:1101px;top:87px;width:1px;height:14px;background:#404040;"></div><div style="left:1090px;top:96px;width:6px;height:2px;background:#000;"></div><div style="left:1102px;top:87px;width:16px;height:14px;background:#D4D0C8;"></div><div style="left:1102px;top:87px;width:15px;height:1px;background:#FFFFFF;"></div><div style="left:1102px;top:87px;width:1px;height:13px;background:#FFFFFF;"></div><div style="left:1103px;top:99px;width:14px;height:1px;background:#808080;"></div><div style="left:1116px;top:88px;width:1px;height:12px;background:#808080;"></div><div style="left:1102px;top:100px;width:16px;height:1px;background:#404040;"></div><div style="left:1117px;top:87px;width:1px;height:14px;background:#404040;"></div><svg style="position:absolute;left:1105px;top:89px;" width="9" height="9" viewBox="0 0 9 9" shape-rendering="crispEdges"><rect x="0.5" y="0.5" width="8" height="8" fill="none" stroke="#000"/><rect x="0" y="0" width="9" height="2" fill="#000"/></svg><div style="left:1120px;top:87px;width:16px;height:14px;background:#D4D0C8;"></div><div style="left:1120px;top:87px;width:15px;height:1px;background:#FFFFFF;"></div><div style="left:1120px;top:87px;width:1px;height:13px;background:#FFFFFF;"></div><div style="left:1121px;top:99px;width:14px;height:1px;background:#808080;"></div><div style="left:1134px;top:88px;width:1px;height:12px;background:#808080;"></div><div style="left:1120px;top:100px;width:16px;height:1px;background:#404040;"></div><div style="left:1135px;top:87px;width:1px;height:14px;background:#404040;"></div><svg style="position:absolute;left:1123px;top:90px;shape-rendering:auto" width="9" height="8" viewBox="0 0 9 8" shape-rendering="crispEdges"><path d="M1 0.5L8 7.5M8 0.5L1 7.5" stroke="#000" stroke-width="1.5" fill="none"/></svg><div style="left:6px;top:103px;width:1131px;height:1px;background:#D4D0C8;"></div><div style="left:6px;top:104px;width:1131px;height:1px;background:#FFFFFF;"></div><div style="left:6px;top:104px;width:1px;height:23px;background:#FFFFFF;"></div><div style="left:171px;top:106px;width:1px;height:20px;background:#808080;"></div><div style="left:172px;top:106px;width:1px;height:20px;background:#FFFFFF;"></div><div style="left:276px;top:106px;width:1px;height:20px;background:#808080;"></div><div style="left:277px;top:106px;width:1px;height:20px;background:#FFFFFF;"></div><svg style="position:absolute;left:15px;top:109px;" width="9" height="13" viewBox="0 0 9 13" shape-rendering="crispEdges"><rect x="0" y="0" width="9" height="1" fill="#000"/><rect x="0" y="1" width="1" height="1" fill="#000"/><rect x="1" y="1" width="1" height="1" fill="#FFFFFF"/><rect x="2" y="1" width="1" height="1" fill="#9C9C9C"/><rect x="3" y="1" width="1" height="1" fill="#FFFFFF"/><rect x="4" y="1" width="1" height="1" fill="#9C9C9C"/><rect x="5" y="1" width="1" height="1" fill="#FFFFFF"/><rect x="6" y="1" width="1" height="1" fill="#9C9C9C"/><rect x="7" y="1" width="1" height="1" fill="#FFFFFF"/><rect x="8" y="1" width="1" height="1" fill="#000"/><rect x="0" y="2" width="1" height="1" fill="#000"/><rect x="1" y="2" width="1" height="1" fill="#9C9C9C"/><rect x="2" y="2" width="1" height="1" fill="#FFFFFF"/><rect x="3" y="2" width="1" height="1" fill="#9C9C9C"/><rect x="4" y="2" width="1" height="1" fill="#FFFFFF"/><rect x="5" y="2" width="1" height="1" fill="#9C9C9C"/><rect x="6" y="2" width="3" height="1" fill="#000"/><rect x="0" y="3" width="1" height="1" fill="#000"/><rect x="1" y="3" width="1" height="1" fill="#FFFFFF"/><rect x="2" y="3" width="1" height="1" fill="#9C9C9C"/><rect x="3" y="3" width="1" height="1" fill="#FFFFFF"/><rect x="4" y="3" width="1" height="1" fill="#9C9C9C"/><rect x="5" y="3" width="1" height="1" fill="#FFFFFF"/><rect x="6" y="3" width="3" height="1" fill="#000"/><rect x="0" y="4" width="1" height="1" fill="#000"/><rect x="1" y="4" width="1" height="1" fill="#9C9C9C"/><rect x="2" y="4" width="1" height="1" fill="#FFFFFF"/><rect x="3" y="4" width="1" height="1" fill="#9C9C9C"/><rect x="4" y="4" width="1" height="1" fill="#FFFFFF"/><rect x="5" y="4" width="1" height="1" fill="#9C9C9C"/><rect x="6" y="4" width="3" height="1" fill="#000"/><rect x="0" y="5" width="1" height="1" fill="#000"/><rect x="1" y="5" width="1" height="1" fill="#FFFFFF"/><rect x="2" y="5" width="1" height="1" fill="#9C9C9C"/><rect x="3" y="5" width="1" height="1" fill="#FFFFFF"/><rect x="4" y="5" width="1" height="1" fill="#9C9C9C"/><rect x="5" y="5" width="1" height="1" fill="#FFFFFF"/><rect x="6" y="5" width="3" height="1" fill="#000"/><rect x="0" y="6" width="1" height="1" fill="#000"/><rect x="1" y="6" width="1" height="1" fill="#9C9C9C"/><rect x="2" y="6" width="1" height="1" fill="#FFFFFF"/><rect x="3" y="6" width="1" height="1" fill="#9C9C9C"/><rect x="4" y="6" width="1" height="1" fill="#FFFFFF"/><rect x="5" y="6" width="1" height="1" fill="#9C9C9C"/><rect x="6" y="6" width="3" height="1" fill="#000"/><rect x="0" y="7" width="1" height="1" fill="#000"/><rect x="1" y="7" width="1" height="1" fill="#FFFFFF"/><rect x="2" y="7" width="1" height="1" fill="#9C9C9C"/><rect x="3" y="7" width="1" height="1" fill="#FFFFFF"/><rect x="4" y="7" width="1" height="1" fill="#9C9C9C"/><rect x="5" y="7" width="1" height="1" fill="#FFFFFF"/><rect x="6" y="7" width="3" height="1" fill="#000"/><rect x="0" y="8" width="1" height="1" fill="#000"/><rect x="1" y="8" width="1" height="1" fill="#9C9C9C"/><rect x="2" y="8" width="1" height="1" fill="#FFFFFF"/><rect x="3" y="8" width="1" height="1" fill="#9C9C9C"/><rect x="4" y="8" width="1" height="1" fill="#FFFFFF"/><rect x="5" y="8" width="1" height="1" fill="#9C9C9C"/><rect x="6" y="8" width="2" height="1" fill="#FFFFFF"/><rect x="8" y="8" width="1" height="1" fill="#000"/><rect x="0" y="9" width="1" height="1" fill="#000"/><rect x="1" y="9" width="1" height="1" fill="#FFFFFF"/><rect x="2" y="9" width="1" height="1" fill="#9C9C9C"/><rect x="3" y="9" width="1" height="1" fill="#FFFFFF"/><rect x="4" y="9" width="5" height="1" fill="#000"/><rect x="0" y="10" width="1" height="1" fill="#000"/><rect x="1" y="10" width="1" height="1" fill="#9C9C9C"/><rect x="2" y="10" width="1" height="1" fill="#FFFFFF"/><rect x="3" y="10" width="1" height="1" fill="#9C9C9C"/><rect x="4" y="10" width="1" height="1" fill="#FFFFFF"/><rect x="5" y="10" width="1" height="1" fill="#9C9C9C"/><rect x="6" y="10" width="2" height="1" fill="#FFFFFF"/><rect x="8" y="10" width="1" height="1" fill="#000"/><rect x="0" y="11" width="1" height="1" fill="#000"/><rect x="1" y="11" width="1" height="1" fill="#FFFFFF"/><rect x="2" y="11" width="1" height="1" fill="#9C9C9C"/><rect x="3" y="11" width="1" height="1" fill="#FFFFFF"/><rect x="4" y="11" width="5" height="1" fill="#000"/><rect x="0" y="12" width="9" height="1" fill="#000"/></svg><span style="left:30px;top:106px;font-size:11px;font-weight:normal;color:#000;letter-spacing:-0.2px;">[1]closed : polyglass 33V</span><svg style="position:absolute;left:159px;top:115px;" width="5" height="3" viewBox="0 0 5 3" shape-rendering="crispEdges"><rect x="0" y="0" width="5" height="1" fill="#000"/><rect x="1" y="1" width="3" height="1" fill="#000"/><rect x="2" y="2" width="1" height="1" fill="#000"/></svg><svg style="position:absolute;left:181px;top:110px;" width="16" height="11" viewBox="0 0 16 11" shape-rendering="crispEdges"><rect x="3" y="0" width="3" height="1" fill="#000"/><rect x="2" y="1" width="1" height="1" fill="#000"/><rect x="6" y="1" width="1" height="1" fill="#000"/><rect x="2" y="2" width="1" height="1" fill="#000"/><rect x="6" y="2" width="1" height="1" fill="#000"/><rect x="1" y="3" width="1" height="1" fill="#000"/><rect x="7" y="3" width="1" height="1" fill="#000"/><rect x="1" y="4" width="1" height="1" fill="#000"/><rect x="7" y="4" width="1" height="1" fill="#000"/><rect x="0" y="5" width="1" height="1" fill="#000"/><rect x="1" y="5" width="7" height="1" fill="#9C9C9C"/><rect x="8" y="5" width="1" height="1" fill="#000"/><rect x="9" y="5" width="7" height="1" fill="#9C9C9C"/><rect x="9" y="6" width="1" height="1" fill="#000"/><rect x="15" y="6" width="1" height="1" fill="#000"/><rect x="9" y="7" width="1" height="1" fill="#000"/><rect x="15" y="7" width="1" height="1" fill="#000"/><rect x="10" y="8" width="1" height="1" fill="#000"/><rect x="14" y="8" width="1" height="1" fill="#000"/><rect x="10" y="9" width="1" height="1" fill="#000"/><rect x="14" y="9" width="1" height="1" fill="#000"/><rect x="11" y="10" width="3" height="1" fill="#000"/></svg><span style="left:199px;top:106px;font-size:11px;font-weight:normal;color:#000;letter-spacing:-0.15px;">Impedance</span><svg style="position:absolute;left:264px;top:115px;" width="5" height="3" viewBox="0 0 5 3" shape-rendering="crispEdges"><rect x="0" y="0" width="5" height="1" fill="#000"/><rect x="1" y="1" width="3" height="1" fill="#000"/><rect x="2" y="2" width="1" height="1" fill="#000"/></svg><svg style="position:absolute;left:286px;top:108px;" width="16" height="15" viewBox="0 0 16 15" shape-rendering="crispEdges"><rect x="3" y="0" width="6" height="1" fill="#000"/><rect x="3" y="1" width="1" height="1" fill="#000"/><rect x="4" y="1" width="4" height="1" fill="#FFFFFF"/><rect x="8" y="1" width="2" height="1" fill="#000"/><rect x="3" y="2" width="1" height="1" fill="#000"/><rect x="4" y="2" width="1" height="1" fill="#FFFFFF"/><rect x="5" y="2" width="1" height="1" fill="#000"/><rect x="6" y="2" width="3" height="1" fill="#FFFFFF"/><rect x="9" y="2" width="2" height="1" fill="#000"/><rect x="3" y="3" width="1" height="1" fill="#000"/><rect x="4" y="3" width="6" height="1" fill="#FFFFFF"/><rect x="10" y="3" width="1" height="1" fill="#000"/><rect x="3" y="4" width="1" height="1" fill="#000"/><rect x="4" y="4" width="1" height="1" fill="#FFFFFF"/><rect x="5" y="4" width="2" height="1" fill="#000"/><rect x="7" y="4" width="3" height="1" fill="#FFFFFF"/><rect x="10" y="4" width="1" height="1" fill="#000"/><rect x="3" y="5" width="1" height="1" fill="#000"/><rect x="4" y="5" width="6" height="1" fill="#FFFFFF"/><rect x="10" y="5" width="1" height="1" fill="#000"/><rect x="3" y="6" width="1" height="1" fill="#000"/><rect x="4" y="6" width="1" height="1" fill="#FFFFFF"/><rect x="5" y="6" width="4" height="1" fill="#000"/><rect x="9" y="6" width="1" height="1" fill="#FFFFFF"/><rect x="10" y="6" width="1" height="1" fill="#000"/><rect x="3" y="7" width="1" height="1" fill="#000"/><rect x="4" y="7" width="6" height="1" fill="#FFFFFF"/><rect x="10" y="7" width="1" height="1" fill="#000"/><rect x="0" y="8" width="16" height="1" fill="#000"/><rect x="0" y="9" width="1" height="1" fill="#000"/><rect x="1" y="9" width="1" height="1" fill="#FFFFFF"/><rect x="2" y="9" width="1" height="1" fill="#9C9C9C"/><rect x="3" y="9" width="1" height="1" fill="#FFFFFF"/><rect x="4" y="9" width="1" height="1" fill="#9C9C9C"/><rect x="5" y="9" width="1" height="1" fill="#FFFFFF"/><rect x="6" y="9" width="1" height="1" fill="#9C9C9C"/><rect x="7" y="9" width="1" height="1" fill="#FFFFFF"/><rect x="8" y="9" width="1" height="1" fill="#9C9C9C"/><rect x="9" y="9" width="1" height="1" fill="#FFFFFF"/><rect x="10" y="9" width="1" height="1" fill="#9C9C9C"/><rect x="11" y="9" width="1" height="1" fill="#FFFFFF"/><rect x="12" y="9" width="1" height="1" fill="#9C9C9C"/><rect x="13" y="9" width="1" height="1" fill="#FFFFFF"/><rect x="14" y="9" width="1" height="1" fill="#9C9C9C"/><rect x="15" y="9" width="1" height="1" fill="#000"/><rect x="0" y="10" width="1" height="1" fill="#000"/><rect x="1" y="10" width="1" height="1" fill="#9C9C9C"/><rect x="2" y="10" width="1" height="1" fill="#FFFFFF"/><rect x="3" y="10" width="1" height="1" fill="#9C9C9C"/><rect x="4" y="10" width="1" height="1" fill="#FFFFFF"/><rect x="5" y="10" width="1" height="1" fill="#9C9C9C"/><rect x="6" y="10" width="1" height="1" fill="#FFFFFF"/><rect x="7" y="10" width="1" height="1" fill="#9C9C9C"/><rect x="8" y="10" width="1" height="1" fill="#FFFFFF"/><rect x="9" y="10" width="1" height="1" fill="#9C9C9C"/><rect x="10" y="10" width="1" height="1" fill="#FFFFFF"/><rect x="11" y="10" width="1" height="1" fill="#9C9C9C"/><rect x="12" y="10" width="1" height="1" fill="#FFFFFF"/><rect x="13" y="10" width="1" height="1" fill="#9C9C9C"/><rect x="14" y="10" width="1" height="1" fill="#FFFFFF"/><rect x="15" y="10" width="1" height="1" fill="#000"/><rect x="0" y="11" width="16" height="1" fill="#000"/><rect x="0" y="12" width="1" height="1" fill="#000"/><rect x="1" y="12" width="14" height="1" fill="#C8C8C8"/><rect x="15" y="12" width="1" height="1" fill="#000"/><rect x="0" y="13" width="1" height="1" fill="#000"/><rect x="1" y="13" width="14" height="1" fill="#C8C8C8"/><rect x="15" y="13" width="1" height="1" fill="#000"/><rect x="1" y="14" width="14" height="1" fill="#000"/></svg><span style="left:304px;top:106px;font-size:11px;font-weight:normal;color:#000;letter-spacing:-0.3px;">Print</span><div style="left:913px;top:104px;width:224px;height:23px;background:#D4D0C8;"></div><div style="left:913px;top:105px;width:120px;height:21px;background:#000;"></div><div style="left:913px;top:105px;width:120px;height:1px;background:#808080;"></div><div style="left:913px;top:105px;width:1px;height:21px;background:#808080;"></div><div style="left:913px;top:125px;width:120px;height:1px;background:#FFFFFF;"></div><div style="left:1032px;top:105px;width:1px;height:21px;background:#FFFFFF;"></div><div style="left:1034px;top:105px;width:103px;height:21px;background:#000;"></div><div style="left:1034px;top:105px;width:103px;height:1px;background:#808080;"></div><div style="left:1034px;top:105px;width:1px;height:21px;background:#808080;"></div><div style="left:1034px;top:125px;width:103px;height:1px;background:#FFFFFF;"></div><div style="left:1136px;top:105px;width:1px;height:21px;background:#FFFFFF;"></div><span style="left:673px;width:600px;text-align:center;top:107px;font-size:12px;font-weight:normal;color:#C8C8C8;letter-spacing:0.5px;">3,986 ohm</span><span style="left:785px;width:600px;text-align:center;top:107px;font-size:12px;font-weight:normal;color:#C8C8C8;letter-spacing:0.5px;">86,07 Hz</span><div style="left:32px;top:127px;width:1105px;height:1px;background:#C4D6BE;"></div><div style="left:6px;top:128px;width:1132px;height:669px;background:#020202;"></div><svg style="position:absolute;left:6px;top:127px;" width="1132" height="670" viewBox="0 0 1132 670" shape-rendering="crispEdges"><rect x="26" y="635" width="1105" height="1" fill="#5EA05E"/><rect x="26" y="613" width="1105" height="1" fill="#5EA05E"/><rect x="26" y="591" width="1105" height="1" fill="#5EA05E"/><rect x="26" y="570" width="1105" height="1" fill="#5EA05E"/><rect x="26" y="548" width="1105" height="1" fill="#5EA05E"/><rect x="26" y="526" width="1105" height="1" fill="#5EA05E"/><rect x="26" y="504" width="1105" height="1" fill="#5EA05E"/><rect x="26" y="482" width="1105" height="1" fill="#5EA05E"/><rect x="26" y="460" width="1105" height="1" fill="#5EA05E"/><rect x="26" y="438" width="1105" height="1" fill="#5EA05E"/><rect x="26" y="416" width="1105" height="1" fill="#5EA05E"/><rect x="26" y="395" width="1105" height="1" fill="#5EA05E"/><rect x="26" y="373" width="1105" height="1" fill="#5EA05E"/><rect x="26" y="351" width="1105" height="1" fill="#5EA05E"/><rect x="26" y="329" width="1105" height="1" fill="#5EA05E"/><rect x="26" y="307" width="1105" height="1" fill="#5EA05E"/><rect x="26" y="285" width="1105" height="1" fill="#5EA05E"/><rect x="26" y="263" width="1105" height="1" fill="#5EA05E"/><rect x="26" y="242" width="1105" height="1" fill="#5EA05E"/><rect x="26" y="220" width="1105" height="1" fill="#5EA05E"/><rect x="26" y="198" width="1105" height="1" fill="#5EA05E"/><rect x="26" y="176" width="1105" height="1" fill="#5EA05E"/><rect x="26" y="154" width="1105" height="1" fill="#5EA05E"/><rect x="26" y="132" width="1105" height="1" fill="#5EA05E"/><rect x="26" y="110" width="1105" height="1" fill="#5EA05E"/><rect x="26" y="88" width="1105" height="1" fill="#5EA05E"/><rect x="26" y="67" width="1105" height="1" fill="#5EA05E"/><rect x="26" y="45" width="1105" height="1" fill="#5EA05E"/><rect x="26" y="23" width="1105" height="1" fill="#5EA05E"/><rect x="26" y="1" width="1105" height="1" fill="#5EA05E"/><rect x="26" y="656" width="1105" height="1" fill="#5EA05E"/><rect x="26" y="1" width="1" height="656" fill="#5EA05E"/><rect x="165" y="1" width="1" height="656" fill="#5EA05E"/><rect x="264" y="1" width="1" height="656" fill="#5EA05E"/><rect x="341" y="1" width="1" height="656" fill="#5EA05E"/><rect x="403" y="1" width="1" height="656" fill="#5EA05E"/><rect x="456" y="1" width="1" height="656" fill="#5EA05E"/><rect x="502" y="1" width="1" height="656" fill="#5EA05E"/><rect x="542" y="1" width="1" height="656" fill="#5EA05E"/><rect x="579" y="1" width="1" height="656" fill="#5EA05E"/><rect x="816" y="1" width="1" height="656" fill="#5EA05E"/><rect x="956" y="1" width="1" height="656" fill="#5EA05E"/><rect x="1054" y="1" width="1" height="656" fill="#5EA05E"/><rect x="1131" y="1" width="1" height="656" fill="#5EA05E"/><rect x="26" y="570" width="1105" height="1" fill="#DEAADC"/><rect x="527" y="1" width="1" height="656" fill="#F4F4F4"/><path d="M26 591h1v1h-1zM27 591h1v1h-1zM28 591h1v1h-1zM29 591h1v1h-1zM30 591h1v1h-1zM31 591h1v1h-1zM32 591h1v1h-1zM33 591h1v1h-1zM34 591h1v1h-1zM35 591h1v1h-1zM36 591h1v1h-1zM37 591h1v1h-1zM38 591h1v1h-1zM39 591h1v1h-1zM40 591h1v1h-1zM41 591h1v1h-1zM42 591h1v1h-1zM43 591h1v1h-1zM44 591h1v1h-1zM45 591h1v1h-1zM46 591h1v1h-1zM47 591h1v1h-1zM48 591h1v1h-1zM49 590h1v1h-1zM50 590h1v1h-1zM51 590h1v1h-1zM52 590h1v1h-1zM53 590h1v1h-1zM54 590h1v1h-1zM55 590h1v1h-1zM56 590h1v1h-1zM57 590h1v1h-1zM58 590h1v1h-1zM59 590h1v1h-1zM60 590h1v1h-1zM61 590h1v1h-1zM62 590h1v1h-1zM63 590h1v1h-1zM64 590h1v1h-1zM65 590h1v1h-1zM66 590h1v1h-1zM67 590h1v1h-1zM68 590h1v1h-1zM69 590h1v1h-1zM70 590h1v1h-1zM71 590h1v1h-1zM72 590h1v1h-1zM73 590h1v1h-1zM74 590h1v1h-1zM75 590h1v1h-1zM76 589h1v1h-1zM77 589h1v1h-1zM78 589h1v1h-1zM79 589h1v1h-1zM80 589h1v1h-1zM81 589h1v1h-1zM82 589h1v1h-1zM83 589h1v1h-1zM84 589h1v1h-1zM85 589h1v1h-1zM86 589h1v1h-1zM87 589h1v1h-1zM88 589h1v1h-1zM89 589h1v1h-1zM90 589h1v1h-1zM91 589h1v1h-1zM92 589h1v1h-1zM93 589h1v1h-1zM94 589h1v1h-1zM95 589h1v1h-1zM96 589h1v1h-1zM97 588h1v1h-1zM98 588h1v1h-1zM99 588h1v1h-1zM100 588h1v1h-1zM101 588h1v1h-1zM102 588h1v1h-1zM103 588h1v1h-1zM104 588h1v1h-1zM105 588h1v1h-1zM106 588h1v1h-1zM107 588h1v1h-1zM108 588h1v1h-1zM109 588h1v1h-1zM110 588h1v1h-1zM111 588h1v1h-1zM112 588h1v1h-1zM113 588h1v1h-1zM114 588h1v1h-1zM115 587h1v1h-1zM116 587h1v1h-1zM117 587h1v1h-1zM118 587h1v1h-1zM119 587h1v1h-1zM120 587h1v1h-1zM121 587h1v1h-1zM122 587h1v1h-1zM123 587h1v1h-1zM124 587h1v1h-1zM125 587h1v1h-1zM126 587h1v1h-1zM127 587h1v1h-1zM128 587h1v1h-1zM129 587h1v1h-1zM130 586h1v1h-1zM131 586h1v1h-1zM132 586h1v1h-1zM133 586h1v1h-1zM134 586h1v1h-1zM135 586h1v1h-1zM136 586h1v1h-1zM137 586h1v1h-1zM138 586h1v1h-1zM139 586h1v1h-1zM140 586h1v1h-1zM141 586h1v1h-1zM142 586h1v1h-1zM143 585h1v1h-1zM144 585h1v1h-1zM145 585h1v1h-1zM146 585h1v1h-1zM147 585h1v1h-1zM148 585h1v1h-1zM149 585h1v1h-1zM150 585h1v1h-1zM151 585h1v1h-1zM152 585h1v1h-1zM153 585h1v1h-1zM154 584h1v1h-1zM155 584h1v1h-1zM156 584h1v1h-1zM157 584h1v1h-1zM158 584h1v1h-1zM159 584h1v1h-1zM160 584h1v1h-1zM161 584h1v1h-1zM162 584h1v1h-1zM163 584h1v1h-1zM164 583h1v1h-1zM165 583h1v1h-1zM166 583h1v1h-1zM167 583h1v1h-1zM168 583h1v1h-1zM169 583h1v1h-1zM170 583h1v1h-1zM171 583h1v1h-1zM172 583h1v1h-1zM173 582h1v1h-1zM174 582h1v1h-1zM175 582h1v1h-1zM176 582h1v1h-1zM177 582h1v1h-1zM178 582h1v1h-1zM179 582h1v1h-1zM180 582h1v1h-1zM181 581h1v1h-1zM182 581h1v1h-1zM183 581h1v1h-1zM184 581h1v1h-1zM185 581h1v1h-1zM186 581h1v1h-1zM187 581h1v1h-1zM188 581h1v1h-1zM189 580h1v1h-1zM190 580h1v1h-1zM191 580h1v1h-1zM192 580h1v1h-1zM193 580h1v1h-1zM194 580h1v1h-1zM195 579h1v1h-1zM196 579h1v1h-1zM197 579h1v1h-1zM198 579h1v1h-1zM199 579h1v1h-1zM200 579h1v1h-1zM201 579h1v1h-1zM202 578h1v1h-1zM203 578h1v1h-1zM204 578h1v1h-1zM205 578h1v1h-1zM206 578h1v1h-1zM207 577h1v1h-1zM208 577h1v1h-1zM209 577h1v1h-1zM210 577h1v1h-1zM211 577h1v1h-1zM212 577h1v1h-1zM213 576h1v1h-1zM214 576h1v1h-1zM215 576h1v1h-1zM216 576h1v1h-1zM217 576h1v1h-1zM218 575h1v1h-1zM219 575h1v1h-1zM220 575h1v1h-1zM221 575h1v1h-1zM222 574h1v1h-1zM223 574h1v1h-1zM224 574h1v1h-1zM225 574h1v1h-1zM226 573h1v1h-1zM227 573h1v1h-1zM228 573h1v1h-1zM229 573h1v1h-1zM230 573h1v1h-1zM231 572h1v1h-1zM232 572h1v1h-1zM233 572h1v1h-1zM234 571h1v1h-1zM235 571h1v1h-1zM236 571h1v1h-1zM237 571h1v1h-1zM238 570h1v1h-1zM239 570h1v1h-1zM240 570h1v1h-1zM241 569h1v1h-1zM242 569h1v1h-1zM243 569h1v1h-1zM244 569h1v1h-1zM245 568h1v1h-1zM246 568h1v1h-1zM247 568h1v1h-1zM248 567h1v1h-1zM249 567h1v1h-1zM250 567h1v1h-1zM251 566h1v1h-1zM252 566h1v1h-1zM253 566h1v1h-1zM254 565h1v1h-1zM255 565h1v1h-1zM256 564h1v1h-1zM257 564h1v1h-1zM258 564h1v1h-1zM259 563h1v1h-1zM260 563h1v1h-1zM261 562h1v1h-1zM262 562h1v1h-1zM263 562h1v1h-1zM264 561h1v1h-1zM265 561h1v1h-1zM266 560h1v1h-1zM267 560h1v1h-1zM268 559h1v1h-1zM269 559h1v1h-1zM270 558h1v1h-1zM271 558h1v1h-1zM272 557h1v1h-1zM273 557h1v1h-1zM274 556h1v1h-1zM275 556h1v1h-1zM276 555h1v1h-1zM277 555h1v1h-1zM278 554h1v1h-1zM279 553h1v1h-1zM280 553h1v1h-1zM281 552h1v1h-1zM282 552h1v1h-1zM283 551h1v1h-1zM284 550h1v1h-1zM285 550h1v1h-1zM286 549h1v1h-1zM287 548h1v1h-1zM288 548h1v1h-1zM289 547h1v1h-1zM290 546h1v1h-1zM291 546h1v1h-1zM292 545h1v1h-1zM293 544h1v1h-1zM294 543h1v1h-1zM295 542h1v1h-1zM296 542h1v1h-1zM297 541h1v1h-1zM298 540h1v1h-1zM299 539h1v1h-1zM300 538h1v1h-1zM301 537h1v1h-1zM302 536h1v1h-1zM303 535h1v1h-1zM304 534h1v1h-1zM305 533h1v1h-1zM306 532h1v1h-1zM307 531h1v1h-1zM308 530h1v1h-1zM309 529h1v1h-1zM310 528h1v1h-1zM311 527h1v1h-1zM312 526h1v1h-1zM313 525h1v1h-1zM314 523h1v2h-1zM315 522h1v1h-1zM316 521h1v1h-1zM317 519h1v2h-1zM318 518h1v1h-1zM319 517h1v1h-1zM320 515h1v2h-1zM321 514h1v1h-1zM322 512h1v2h-1zM323 511h1v1h-1zM324 509h1v2h-1zM325 507h1v2h-1zM326 506h1v1h-1zM327 504h1v2h-1zM328 502h1v2h-1zM329 500h1v2h-1zM330 498h1v2h-1zM331 496h1v2h-1zM332 494h1v2h-1zM333 492h1v2h-1zM334 490h1v2h-1zM335 488h1v2h-1zM336 486h1v2h-1zM336 485h1v1h-1zM337 483h1v2h-1zM338 481h1v2h-1zM338 480h1v1h-1zM339 478h1v2h-1zM340 476h1v2h-1zM340 475h1v1h-1zM341 473h1v2h-1zM341 472h1v1h-1zM342 470h1v2h-1zM343 468h1v2h-1zM343 467h1v1h-1zM344 465h1v2h-1zM344 464h1v1h-1zM345 462h1v2h-1zM345 461h1v1h-1zM346 459h1v2h-1zM346 458h1v1h-1zM347 455h1v3h-1zM347 454h1v1h-1zM348 452h1v2h-1zM348 451h1v1h-1zM349 449h1v2h-1zM349 448h1v1h-1zM350 445h1v3h-1zM350 444h1v1h-1zM351 441h1v3h-1zM351 440h1v1h-1zM352 438h1v2h-1zM352 437h1v1h-1zM353 434h1v3h-1zM353 433h1v1h-1zM354 430h1v3h-1zM354 428h1v2h-1zM355 425h1v3h-1zM355 424h1v1h-1zM356 421h1v3h-1zM356 419h1v2h-1zM357 416h1v3h-1zM357 415h1v1h-1zM358 412h1v3h-1zM358 410h1v2h-1zM359 407h1v3h-1zM359 405h1v2h-1zM360 402h1v3h-1zM360 400h1v2h-1zM361 397h1v3h-1zM361 395h1v2h-1zM362 391h1v4h-1zM362 389h1v2h-1zM363 386h1v3h-1zM363 384h1v2h-1zM364 380h1v4h-1zM364 378h1v2h-1zM365 374h1v4h-1zM365 372h1v2h-1zM366 368h1v4h-1zM366 366h1v2h-1zM367 362h1v4h-1zM367 359h1v3h-1zM368 355h1v4h-1zM368 352h1v3h-1zM369 348h1v4h-1zM369 345h1v3h-1zM370 341h1v4h-1zM370 338h1v3h-1zM371 334h1v4h-1zM371 331h1v3h-1zM372 327h1v4h-1zM372 324h1v3h-1zM373 319h1v5h-1zM373 316h1v3h-1zM374 312h1v4h-1zM374 309h1v3h-1zM375 304h1v5h-1zM375 301h1v3h-1zM376 296h1v5h-1zM376 293h1v3h-1zM377 288h1v5h-1zM377 285h1v3h-1zM378 280h1v5h-1zM378 277h1v3h-1zM379 272h1v5h-1zM379 269h1v3h-1zM380 264h1v5h-1zM380 261h1v3h-1zM381 257h1v4h-1zM381 254h1v3h-1zM382 249h1v5h-1zM382 246h1v3h-1zM383 242h1v4h-1zM383 239h1v3h-1zM384 235h1v4h-1zM384 232h1v3h-1zM385 228h1v4h-1zM385 226h1v2h-1zM386 222h1v4h-1zM386 220h1v2h-1zM387 216h1v4h-1zM387 215h1v1h-1zM388 212h1v3h-1zM388 210h1v2h-1zM389 207h1v3h-1zM389 206h1v1h-1zM390 204h1v2h-1zM391 202h1v2h-1zM392 200h1v2h-1zM393 200h1v1h-1zM394 200h1v1h-1zM394 201h1v1h-1zM395 202h1v1h-1zM395 203h1v1h-1zM396 204h1v1h-1zM396 205h1v2h-1zM397 207h1v2h-1zM397 209h1v2h-1zM398 211h1v3h-1zM398 214h1v2h-1zM399 216h1v3h-1zM399 219h1v3h-1zM400 222h1v3h-1zM400 225h1v3h-1zM401 228h1v4h-1zM401 232h1v3h-1zM402 235h1v4h-1zM402 239h1v4h-1zM403 243h1v4h-1zM403 247h1v4h-1zM404 251h1v4h-1zM404 255h1v4h-1zM405 259h1v4h-1zM405 263h1v4h-1zM406 267h1v4h-1zM406 271h1v4h-1zM407 275h1v5h-1zM407 280h1v4h-1zM408 284h1v4h-1zM408 288h1v4h-1zM409 292h1v5h-1zM409 297h1v4h-1zM410 301h1v4h-1zM410 305h1v4h-1zM411 309h1v4h-1zM411 313h1v4h-1zM412 317h1v4h-1zM412 321h1v4h-1zM413 325h1v4h-1zM413 329h1v4h-1zM414 333h1v4h-1zM414 337h1v3h-1zM415 340h1v4h-1zM415 344h1v4h-1zM416 348h1v4h-1zM416 352h1v3h-1zM417 355h1v4h-1zM417 359h1v3h-1zM418 362h1v4h-1zM418 366h1v3h-1zM419 369h1v3h-1zM419 372h1v3h-1zM420 375h1v4h-1zM420 379h1v3h-1zM421 382h1v3h-1zM421 385h1v3h-1zM422 388h1v3h-1zM422 391h1v3h-1zM423 394h1v3h-1zM423 397h1v2h-1zM424 399h1v3h-1zM424 402h1v3h-1zM425 405h1v3h-1zM425 408h1v2h-1zM426 410h1v3h-1zM426 413h1v2h-1zM427 415h1v3h-1zM427 418h1v2h-1zM428 420h1v3h-1zM428 423h1v2h-1zM429 425h1v2h-1zM429 427h1v2h-1zM430 429h1v3h-1zM430 432h1v2h-1zM431 434h1v2h-1zM431 436h1v2h-1zM432 438h1v2h-1zM432 440h1v2h-1zM433 442h1v2h-1zM433 444h1v2h-1zM434 446h1v2h-1zM434 448h1v2h-1zM435 450h1v2h-1zM435 452h1v2h-1zM436 454h1v2h-1zM436 456h1v1h-1zM437 457h1v2h-1zM437 459h1v1h-1zM438 460h1v2h-1zM438 462h1v2h-1zM439 464h1v2h-1zM439 466h1v1h-1zM440 467h1v2h-1zM440 469h1v1h-1zM441 470h1v2h-1zM441 472h1v1h-1zM442 473h1v2h-1zM442 475h1v1h-1zM443 476h1v2h-1zM443 478h1v1h-1zM444 479h1v1h-1zM444 480h1v1h-1zM445 481h1v2h-1zM445 483h1v1h-1zM446 484h1v2h-1zM446 486h1v1h-1zM447 487h1v1h-1zM447 488h1v1h-1zM448 489h1v2h-1zM448 491h1v1h-1zM449 492h1v1h-1zM449 493h1v1h-1zM450 494h1v1h-1zM450 495h1v1h-1zM451 496h1v1h-1zM451 497h1v1h-1zM452 498h1v2h-1zM452 500h1v1h-1zM453 501h1v1h-1zM453 502h1v1h-1zM454 503h1v1h-1zM454 504h1v1h-1zM455 505h1v1h-1zM455 506h1v1h-1zM456 507h1v1h-1zM457 508h1v1h-1zM457 509h1v1h-1zM458 510h1v1h-1zM458 511h1v1h-1zM459 512h1v1h-1zM459 513h1v1h-1zM460 514h1v1h-1zM461 515h1v1h-1zM461 516h1v1h-1zM462 517h1v1h-1zM463 518h1v1h-1zM463 519h1v1h-1zM464 520h1v1h-1zM465 521h1v1h-1zM465 522h1v1h-1zM466 523h1v1h-1zM467 524h1v1h-1zM467 525h1v1h-1zM468 526h1v1h-1zM469 527h1v1h-1zM470 528h1v1h-1zM471 529h1v1h-1zM471 530h1v1h-1zM472 531h1v1h-1zM473 532h1v1h-1zM474 533h1v1h-1zM475 534h1v1h-1zM476 535h1v1h-1zM477 536h1v1h-1zM477 537h1v1h-1zM478 538h1v1h-1zM479 539h1v1h-1zM480 540h1v1h-1zM481 541h1v1h-1zM482 542h1v1h-1zM483 542h1v1h-1zM484 543h1v1h-1zM485 544h1v1h-1zM486 545h1v1h-1zM487 546h1v1h-1zM488 547h1v1h-1zM489 548h1v1h-1zM490 548h1v1h-1zM491 549h1v1h-1zM492 550h1v1h-1zM493 551h1v1h-1zM494 552h1v1h-1zM495 552h1v1h-1zM496 553h1v1h-1zM497 554h1v1h-1zM498 554h1v1h-1zM499 555h1v1h-1zM500 556h1v1h-1zM501 556h1v1h-1zM502 557h1v1h-1zM503 558h1v1h-1zM504 558h1v1h-1zM505 559h1v1h-1zM506 559h1v1h-1zM507 560h1v1h-1zM508 560h1v1h-1zM509 561h1v1h-1zM510 562h1v1h-1zM511 562h1v1h-1zM512 563h1v1h-1zM513 563h1v1h-1zM514 564h1v1h-1zM515 564h1v1h-1zM516 565h1v1h-1zM517 565h1v1h-1zM518 565h1v1h-1zM519 566h1v1h-1zM520 566h1v1h-1zM521 567h1v1h-1zM522 567h1v1h-1zM523 568h1v1h-1zM524 568h1v1h-1zM525 569h1v1h-1zM526 569h1v1h-1zM527 569h1v1h-1zM528 570h1v1h-1zM529 570h1v1h-1zM530 570h1v1h-1zM531 571h1v1h-1zM532 571h1v1h-1zM533 572h1v1h-1zM534 572h1v1h-1zM535 572h1v1h-1zM536 573h1v1h-1zM537 573h1v1h-1zM538 573h1v1h-1zM539 574h1v1h-1zM540 574h1v1h-1zM541 574h1v1h-1zM542 574h1v1h-1zM543 575h1v1h-1zM544 575h1v1h-1zM545 575h1v1h-1zM546 576h1v1h-1zM547 576h1v1h-1zM548 576h1v1h-1zM549 576h1v1h-1zM550 577h1v1h-1zM551 577h1v1h-1zM552 577h1v1h-1zM553 578h1v1h-1zM554 578h1v1h-1zM555 578h1v1h-1zM556 578h1v1h-1zM557 579h1v1h-1zM558 579h1v1h-1zM559 579h1v1h-1zM560 579h1v1h-1zM561 579h1v1h-1zM562 580h1v1h-1zM563 580h1v1h-1zM564 580h1v1h-1zM565 580h1v1h-1zM566 581h1v1h-1zM567 581h1v1h-1zM568 581h1v1h-1zM569 581h1v1h-1zM570 581h1v1h-1zM571 582h1v1h-1zM572 582h1v1h-1zM573 582h1v1h-1zM574 582h1v1h-1zM575 582h1v1h-1zM576 583h1v1h-1zM577 583h1v1h-1zM578 583h1v1h-1zM579 583h1v1h-1zM580 583h1v1h-1zM581 583h1v1h-1zM582 584h1v1h-1zM583 584h1v1h-1zM584 584h1v1h-1zM585 584h1v1h-1zM586 584h1v1h-1zM587 584h1v1h-1zM588 585h1v1h-1zM589 585h1v1h-1zM590 585h1v1h-1zM591 585h1v1h-1zM592 585h1v1h-1zM593 585h1v1h-1zM594 585h1v1h-1zM595 586h1v1h-1zM596 586h1v1h-1zM597 586h1v1h-1zM598 586h1v1h-1zM599 586h1v1h-1zM600 586h1v1h-1zM601 586h1v1h-1zM602 587h1v1h-1zM603 587h1v1h-1zM604 587h1v1h-1zM605 587h1v1h-1zM606 587h1v1h-1zM607 587h1v1h-1zM608 587h1v1h-1zM609 587h1v1h-1zM610 588h1v1h-1zM611 588h1v1h-1zM612 588h1v1h-1zM613 588h1v1h-1zM614 588h1v1h-1zM615 588h1v1h-1zM616 588h1v1h-1zM617 588h1v1h-1zM618 588h1v1h-1zM619 589h1v1h-1zM620 589h1v1h-1zM621 589h1v1h-1zM622 589h1v1h-1zM623 589h1v1h-1zM624 589h1v1h-1zM625 589h1v1h-1zM626 589h1v1h-1zM627 589h1v1h-1zM628 590h1v1h-1zM629 590h1v1h-1zM630 590h1v1h-1zM631 590h1v1h-1zM632 590h1v1h-1zM633 590h1v1h-1zM634 590h1v1h-1zM635 590h1v1h-1zM636 590h1v1h-1zM637 590h1v1h-1zM638 590h1v1h-1zM639 591h1v1h-1zM640 591h1v1h-1zM641 591h1v1h-1zM642 591h1v1h-1zM643 591h1v1h-1zM644 591h1v1h-1zM645 591h1v1h-1zM646 591h1v1h-1zM647 591h1v1h-1zM648 591h1v1h-1zM649 591h1v1h-1zM650 591h1v1h-1zM651 591h1v1h-1zM652 592h1v1h-1zM653 592h1v1h-1zM654 592h1v1h-1zM655 592h1v1h-1zM656 592h1v1h-1zM657 592h1v1h-1zM658 592h1v1h-1zM659 592h1v1h-1zM660 592h1v1h-1zM661 592h1v1h-1zM662 592h1v1h-1zM663 592h1v1h-1zM664 592h1v1h-1zM665 592h1v1h-1zM666 592h1v1h-1zM667 593h1v1h-1zM668 593h1v1h-1zM669 593h1v1h-1zM670 593h1v1h-1zM671 593h1v1h-1zM672 593h1v1h-1zM673 593h1v1h-1zM674 593h1v1h-1zM675 593h1v1h-1zM676 593h1v1h-1zM677 593h1v1h-1zM678 593h1v1h-1zM679 593h1v1h-1zM680 593h1v1h-1zM681 593h1v1h-1zM682 593h1v1h-1zM683 593h1v1h-1zM684 594h1v1h-1zM685 594h1v1h-1zM686 594h1v1h-1zM687 594h1v1h-1zM688 594h1v1h-1zM689 594h1v1h-1zM690 594h1v1h-1zM691 594h1v1h-1zM692 594h1v1h-1zM693 594h1v1h-1zM694 594h1v1h-1zM695 594h1v1h-1zM696 594h1v1h-1zM697 594h1v1h-1zM698 594h1v1h-1zM699 594h1v1h-1zM700 594h1v1h-1zM701 594h1v1h-1zM702 594h1v1h-1zM703 594h1v1h-1zM704 595h1v1h-1zM705 595h1v1h-1zM706 595h1v1h-1zM707 595h1v1h-1zM708 595h1v1h-1zM709 595h1v1h-1zM710 595h1v1h-1zM711 595h1v1h-1zM712 595h1v1h-1zM713 595h1v1h-1zM714 595h1v1h-1zM715 595h1v1h-1zM716 595h1v1h-1zM717 595h1v1h-1zM718 595h1v1h-1zM719 595h1v1h-1zM720 595h1v1h-1zM721 595h1v1h-1zM722 595h1v1h-1zM723 595h1v1h-1zM724 595h1v1h-1zM725 595h1v1h-1zM726 595h1v1h-1zM727 595h1v1h-1zM728 595h1v1h-1zM729 596h1v1h-1zM730 596h1v1h-1zM731 596h1v1h-1zM732 596h1v1h-1zM733 596h1v1h-1zM734 596h1v1h-1zM735 596h1v1h-1zM736 596h1v1h-1zM737 596h1v1h-1zM738 596h1v1h-1zM739 596h1v1h-1zM740 596h1v1h-1zM741 596h1v1h-1zM742 596h1v1h-1zM743 596h1v1h-1zM744 596h1v1h-1zM745 596h1v1h-1zM746 596h1v1h-1zM747 596h1v1h-1zM748 596h1v1h-1zM749 596h1v1h-1zM750 596h1v1h-1zM751 596h1v1h-1zM752 596h1v1h-1zM753 596h1v1h-1zM754 596h1v1h-1zM755 596h1v1h-1zM756 596h1v1h-1zM757 596h1v1h-1zM758 596h1v1h-1zM759 596h1v1h-1zM760 596h1v1h-1zM761 596h1v1h-1zM762 597h1v1h-1zM763 597h1v1h-1zM764 597h1v1h-1zM765 597h1v1h-1zM766 597h1v1h-1zM767 597h1v1h-1zM768 597h1v1h-1zM769 597h1v1h-1zM770 597h1v1h-1zM771 597h1v1h-1zM772 597h1v1h-1zM773 597h1v1h-1zM774 597h1v1h-1zM775 597h1v1h-1zM776 597h1v1h-1zM777 597h1v1h-1zM778 597h1v1h-1zM779 597h1v1h-1zM780 597h1v1h-1zM781 597h1v1h-1zM782 597h1v1h-1zM783 597h1v1h-1zM784 597h1v1h-1zM785 597h1v1h-1zM786 597h1v1h-1zM787 597h1v1h-1zM788 597h1v1h-1zM789 597h1v1h-1zM790 597h1v1h-1zM791 597h1v1h-1zM792 597h1v1h-1zM793 597h1v1h-1zM794 597h1v1h-1zM795 597h1v1h-1zM796 597h1v1h-1zM797 597h1v1h-1zM798 597h1v1h-1zM799 597h1v1h-1zM800 597h1v1h-1zM801 597h1v1h-1zM802 597h1v1h-1zM803 597h1v1h-1zM804 597h1v1h-1zM805 597h1v1h-1zM806 597h1v1h-1zM807 598h1v1h-1zM808 598h1v1h-1zM809 598h1v1h-1zM810 598h1v1h-1zM811 598h1v1h-1zM812 598h1v1h-1zM813 598h1v1h-1zM814 598h1v1h-1zM815 598h1v1h-1zM816 598h1v1h-1zM817 598h1v1h-1zM818 598h1v1h-1zM819 598h1v1h-1zM820 598h1v1h-1zM821 598h1v1h-1zM822 598h1v1h-1zM823 598h1v1h-1zM824 598h1v1h-1zM825 598h1v1h-1zM826 598h1v1h-1zM827 598h1v1h-1zM828 598h1v1h-1zM829 598h1v1h-1zM830 598h1v1h-1zM831 598h1v1h-1zM832 598h1v1h-1zM833 598h1v1h-1zM834 598h1v1h-1zM835 598h1v1h-1zM836 598h1v1h-1zM837 598h1v1h-1zM838 598h1v1h-1zM839 598h1v1h-1zM840 598h1v1h-1zM841 598h1v1h-1zM842 598h1v1h-1zM843 598h1v1h-1zM844 598h1v1h-1zM845 598h1v1h-1zM846 598h1v1h-1zM847 598h1v1h-1zM848 598h1v1h-1zM849 598h1v1h-1zM850 598h1v1h-1zM851 598h1v1h-1zM852 598h1v1h-1zM853 598h1v1h-1zM854 598h1v1h-1zM855 598h1v1h-1zM856 598h1v1h-1zM857 598h1v1h-1zM858 598h1v1h-1zM859 598h1v1h-1zM860 598h1v1h-1zM861 598h1v1h-1zM862 598h1v1h-1zM863 598h1v1h-1zM864 598h1v1h-1zM865 598h1v1h-1zM866 598h1v1h-1zM867 598h1v1h-1zM868 598h1v1h-1zM869 598h1v1h-1zM870 598h1v1h-1zM871 598h1v1h-1zM872 598h1v1h-1zM873 598h1v1h-1zM874 598h1v1h-1zM875 599h1v1h-1zM876 599h1v1h-1zM877 599h1v1h-1zM878 599h1v1h-1zM879 599h1v1h-1zM880 599h1v1h-1zM881 599h1v1h-1zM882 599h1v1h-1zM883 599h1v1h-1zM884 599h1v1h-1zM885 599h1v1h-1zM886 599h1v1h-1zM887 599h1v1h-1zM888 599h1v1h-1zM889 599h1v1h-1zM890 599h1v1h-1zM891 599h1v1h-1zM892 599h1v1h-1zM893 599h1v1h-1zM894 599h1v1h-1zM895 599h1v1h-1zM896 599h1v1h-1zM897 599h1v1h-1zM898 599h1v1h-1zM899 599h1v1h-1zM900 599h1v1h-1zM901 599h1v1h-1zM902 599h1v1h-1zM903 599h1v1h-1zM904 599h1v1h-1zM905 599h1v1h-1zM906 599h1v1h-1zM907 599h1v1h-1zM908 599h1v1h-1zM909 599h1v1h-1zM910 599h1v1h-1zM911 599h1v1h-1zM912 599h1v1h-1zM913 599h1v1h-1zM914 599h1v1h-1zM915 599h1v1h-1zM916 599h1v1h-1zM917 599h1v1h-1zM918 599h1v1h-1zM919 599h1v1h-1zM920 599h1v1h-1zM921 599h1v1h-1zM922 599h1v1h-1zM923 599h1v1h-1zM924 599h1v1h-1zM925 599h1v1h-1zM926 599h1v1h-1zM927 599h1v1h-1zM928 599h1v1h-1zM929 599h1v1h-1zM930 599h1v1h-1zM931 599h1v1h-1zM932 599h1v1h-1zM933 599h1v1h-1zM934 599h1v1h-1zM935 599h1v1h-1zM936 599h1v1h-1zM937 599h1v1h-1zM938 599h1v1h-1zM939 599h1v1h-1zM940 599h1v1h-1zM941 599h1v1h-1zM942 599h1v1h-1zM943 599h1v1h-1zM944 599h1v1h-1zM945 599h1v1h-1zM946 599h1v1h-1zM947 599h1v1h-1zM948 599h1v1h-1zM949 599h1v1h-1zM950 599h1v1h-1zM951 599h1v1h-1zM952 599h1v1h-1zM953 599h1v1h-1zM954 599h1v1h-1zM955 599h1v1h-1zM956 599h1v1h-1zM957 599h1v1h-1zM958 599h1v1h-1zM959 599h1v1h-1zM960 599h1v1h-1zM961 599h1v1h-1zM962 599h1v1h-1zM963 599h1v1h-1zM964 599h1v1h-1zM965 599h1v1h-1zM966 599h1v1h-1zM967 599h1v1h-1zM968 599h1v1h-1zM969 599h1v1h-1zM970 599h1v1h-1zM971 599h1v1h-1zM972 599h1v1h-1zM973 599h1v1h-1zM974 599h1v1h-1zM975 599h1v1h-1zM976 599h1v1h-1zM977 599h1v1h-1zM978 599h1v1h-1zM979 599h1v1h-1zM980 599h1v1h-1zM981 599h1v1h-1zM982 599h1v1h-1zM983 599h1v1h-1zM984 599h1v1h-1zM985 599h1v1h-1zM986 599h1v1h-1zM987 599h1v1h-1zM988 599h1v1h-1zM989 599h1v1h-1zM990 599h1v1h-1zM991 599h1v1h-1zM992 599h1v1h-1zM993 599h1v1h-1zM994 599h1v1h-1zM995 599h1v1h-1zM996 599h1v1h-1zM997 599h1v1h-1zM998 599h1v1h-1zM999 599h1v1h-1zM1000 599h1v1h-1zM1001 599h1v1h-1zM1002 599h1v1h-1zM1003 599h1v1h-1zM1004 599h1v1h-1zM1005 599h1v1h-1zM1006 599h1v1h-1zM1007 599h1v1h-1zM1008 599h1v1h-1zM1009 599h1v1h-1zM1010 599h1v1h-1zM1011 600h1v1h-1zM1012 600h1v1h-1zM1013 600h1v1h-1zM1014 600h1v1h-1zM1015 600h1v1h-1zM1016 600h1v1h-1zM1017 600h1v1h-1zM1018 600h1v1h-1zM1019 600h1v1h-1zM1020 600h1v1h-1zM1021 600h1v1h-1zM1022 600h1v1h-1zM1023 600h1v1h-1zM1024 600h1v1h-1zM1025 600h1v1h-1zM1026 600h1v1h-1zM1027 600h1v1h-1zM1028 600h1v1h-1zM1029 600h1v1h-1zM1030 600h1v1h-1zM1031 600h1v1h-1zM1032 600h1v1h-1zM1033 600h1v1h-1zM1034 600h1v1h-1zM1035 600h1v1h-1zM1036 600h1v1h-1zM1037 600h1v1h-1zM1038 600h1v1h-1zM1039 600h1v1h-1zM1040 600h1v1h-1zM1041 600h1v1h-1zM1042 600h1v1h-1zM1043 600h1v1h-1zM1044 600h1v1h-1zM1045 600h1v1h-1zM1046 600h1v1h-1zM1047 600h1v1h-1zM1048 600h1v1h-1zM1049 600h1v1h-1zM1050 600h1v1h-1zM1051 600h1v1h-1zM1052 600h1v1h-1zM1053 600h1v1h-1zM1054 600h1v1h-1zM1055 600h1v1h-1zM1056 600h1v1h-1zM1057 600h1v1h-1zM1058 600h1v1h-1zM1059 600h1v1h-1zM1060 600h1v1h-1zM1061 600h1v1h-1zM1062 600h1v1h-1zM1063 600h1v1h-1zM1064 600h1v1h-1zM1065 600h1v1h-1zM1066 600h1v1h-1zM1067 600h1v1h-1zM1068 600h1v1h-1zM1069 600h1v1h-1zM1070 600h1v1h-1zM1071 600h1v1h-1zM1072 600h1v1h-1zM1073 600h1v1h-1zM1074 600h1v1h-1zM1075 600h1v1h-1zM1076 600h1v1h-1zM1077 600h1v1h-1zM1078 600h1v1h-1zM1079 600h1v1h-1zM1080 600h1v1h-1zM1081 600h1v1h-1zM1082 600h1v1h-1zM1083 600h1v1h-1zM1084 600h1v1h-1zM1085 600h1v1h-1zM1086 600h1v1h-1zM1087 600h1v1h-1zM1088 600h1v1h-1zM1089 600h1v1h-1zM1090 600h1v1h-1zM1091 600h1v1h-1zM1092 600h1v1h-1zM1093 600h1v1h-1zM1094 600h1v1h-1zM1095 600h1v1h-1zM1096 600h1v1h-1zM1097 600h1v1h-1zM1098 600h1v1h-1zM1099 600h1v1h-1zM1100 600h1v1h-1zM1101 600h1v1h-1zM1102 600h1v1h-1zM1103 600h1v1h-1zM1104 600h1v1h-1zM1105 600h1v1h-1zM1106 600h1v1h-1zM1107 600h1v1h-1zM1108 600h1v1h-1zM1109 600h1v1h-1zM1110 600h1v1h-1zM1111 600h1v1h-1zM1112 600h1v1h-1zM1113 600h1v1h-1zM1114 600h1v1h-1zM1115 600h1v1h-1zM1116 600h1v1h-1zM1117 600h1v1h-1zM1118 600h1v1h-1zM1119 600h1v1h-1zM1120 600h1v1h-1zM1121 600h1v1h-1zM1122 600h1v1h-1zM1123 600h1v1h-1zM1124 600h1v1h-1zM1125 600h1v1h-1zM1126 600h1v1h-1zM1127 600h1v1h-1zM1128 600h1v1h-1zM1129 600h1v1h-1zM1130 600h1v1h-1zM1131 600h1v1h-1z" fill="#EEEEA8"/></svg><span style="left:8px;top:752px;font-size:12px;font-weight:normal;color:#fff;letter-spacing:-0.6px;-webkit-text-stroke:0;">1</span><span style="left:8px;top:730px;font-size:12px;font-weight:normal;color:#fff;letter-spacing:-0.6px;-webkit-text-stroke:0;">2</span><span style="left:8px;top:708px;font-size:12px;font-weight:normal;color:#fff;letter-spacing:-0.6px;-webkit-text-stroke:0;">3</span><span style="left:8px;top:687px;font-size:12px;font-weight:normal;color:#fff;letter-spacing:-0.6px;-webkit-text-stroke:0;">4</span><span style="left:8px;top:665px;font-size:12px;font-weight:normal;color:#fff;letter-spacing:-0.6px;-webkit-text-stroke:0;">5</span><span style="left:8px;top:643px;font-size:12px;font-weight:normal;color:#fff;letter-spacing:-0.6px;-webkit-text-stroke:0;">6</span><span style="left:8px;top:621px;font-size:12px;font-weight:normal;color:#fff;letter-spacing:-0.6px;-webkit-text-stroke:0;">7</span><span style="left:8px;top:599px;font-size:12px;font-weight:normal;color:#fff;letter-spacing:-0.6px;-webkit-text-stroke:0;">8</span><span style="left:8px;top:577px;font-size:12px;font-weight:normal;color:#fff;letter-spacing:-0.6px;-webkit-text-stroke:0;">9</span><span style="left:8px;top:555px;font-size:12px;font-weight:normal;color:#fff;letter-spacing:-0.6px;-webkit-text-stroke:0;">10</span><span style="left:8px;top:533px;font-size:12px;font-weight:normal;color:#fff;letter-spacing:-0.6px;-webkit-text-stroke:0;">11</span><span style="left:8px;top:512px;font-size:12px;font-weight:normal;color:#fff;letter-spacing:-0.6px;-webkit-text-stroke:0;">12</span><span style="left:8px;top:490px;font-size:12px;font-weight:normal;color:#fff;letter-spacing:-0.6px;-webkit-text-stroke:0;">13</span><span style="left:8px;top:468px;font-size:12px;font-weight:normal;color:#fff;letter-spacing:-0.6px;-webkit-text-stroke:0;">14</span><span style="left:8px;top:446px;font-size:12px;font-weight:normal;color:#fff;letter-spacing:-0.6px;-webkit-text-stroke:0;">15</span><span style="left:8px;top:424px;font-size:12px;font-weight:normal;color:#fff;letter-spacing:-0.6px;-webkit-text-stroke:0;">16</span><span style="left:8px;top:402px;font-size:12px;font-weight:normal;color:#fff;letter-spacing:-0.6px;-webkit-text-stroke:0;">17</span><span style="left:8px;top:380px;font-size:12px;font-weight:normal;color:#fff;letter-spacing:-0.6px;-webkit-text-stroke:0;">18</span><span style="left:8px;top:359px;font-size:12px;font-weight:normal;color:#fff;letter-spacing:-0.6px;-webkit-text-stroke:0;">19</span><span style="left:8px;top:337px;font-size:12px;font-weight:normal;color:#fff;letter-spacing:-0.6px;-webkit-text-stroke:0;">20</span><span style="left:8px;top:315px;font-size:12px;font-weight:normal;color:#fff;letter-spacing:-0.6px;-webkit-text-stroke:0;">21</span><span style="left:8px;top:293px;font-size:12px;font-weight:normal;color:#fff;letter-spacing:-0.6px;-webkit-text-stroke:0;">22</span><span style="left:8px;top:271px;font-size:12px;font-weight:normal;color:#fff;letter-spacing:-0.6px;-webkit-text-stroke:0;">23</span><span style="left:8px;top:249px;font-size:12px;font-weight:normal;color:#fff;letter-spacing:-0.6px;-webkit-text-stroke:0;">24</span><span style="left:8px;top:227px;font-size:12px;font-weight:normal;color:#fff;letter-spacing:-0.6px;-webkit-text-stroke:0;">25</span><span style="left:8px;top:205px;font-size:12px;font-weight:normal;color:#fff;letter-spacing:-0.6px;-webkit-text-stroke:0;">26</span><span style="left:8px;top:184px;font-size:12px;font-weight:normal;color:#fff;letter-spacing:-0.6px;-webkit-text-stroke:0;">27</span><span style="left:8px;top:162px;font-size:12px;font-weight:normal;color:#fff;letter-spacing:-0.6px;-webkit-text-stroke:0;">28</span><span style="left:8px;top:140px;font-size:12px;font-weight:normal;color:#fff;letter-spacing:-0.6px;-webkit-text-stroke:0;">29</span><span style="left:37px;top:781px;font-size:12px;font-weight:normal;color:#fff;letter-spacing:-0.6px;-webkit-text-stroke:0;">20</span><span style="left:47px;width:600px;text-align:center;top:781px;font-size:12px;font-weight:normal;color:#fff;letter-spacing:-0.6px;-webkit-text-stroke:0;">50</span><span style="left:285px;width:600px;text-align:center;top:781px;font-size:12px;font-weight:normal;color:#fff;letter-spacing:-0.6px;-webkit-text-stroke:0;">100</span><span style="left:522px;width:600px;text-align:center;top:781px;font-size:12px;font-weight:normal;color:#fff;letter-spacing:-0.6px;-webkit-text-stroke:0;">200</span><span style="left:533px;width:600px;text-align:right;top:781px;font-size:12px;font-weight:normal;color:#fff;letter-spacing:-0.6px;-webkit-text-stroke:0;">500</span><div style="left:602px;top:261px;width:401px;height:375px;background:#D4D0C8;"></div><div style="left:602px;top:261px;width:400px;height:1px;background:#D4D0C8;"></div><div style="left:602px;top:261px;width:1px;height:374px;background:#D4D0C8;"></div><div style="left:603px;top:262px;width:398px;height:1px;background:#FFFFFF;"></div><div style="left:603px;top:262px;width:1px;height:372px;background:#FFFFFF;"></div><div style="left:603px;top:634px;width:399px;height:1px;background:#808080;"></div><div style="left:1001px;top:262px;width:1px;height:373px;background:#808080;"></div><div style="left:602px;top:635px;width:401px;height:1px;background:#404040;"></div><div style="left:1002px;top:261px;width:1px;height:375px;background:#404040;"></div><div style="left:605px;top:264px;width:394px;height:18px;background:linear-gradient(to right,#0A246A,#A6CAF0);"></div><svg style="position:absolute;left:611px;top:267px;" width="8" height="11" viewBox="0 0 8 11" shape-rendering="crispEdges"><rect x="0" y="0" width="1" height="1" fill="#FFFFFF"/><rect x="1" y="0" width="1" height="1" fill="#9C9C9C"/><rect x="2" y="0" width="1" height="1" fill="#FFFFFF"/><rect x="3" y="0" width="1" height="1" fill="#9C9C9C"/><rect x="4" y="0" width="1" height="1" fill="#FFFFFF"/><rect x="5" y="0" width="1" height="1" fill="#9C9C9C"/><rect x="6" y="0" width="1" height="1" fill="#FFFFFF"/><rect x="7" y="0" width="1" height="1" fill="#000"/><rect x="0" y="1" width="1" height="1" fill="#9C9C9C"/><rect x="1" y="1" width="1" height="1" fill="#FFFFFF"/><rect x="2" y="1" width="1" height="1" fill="#9C9C9C"/><rect x="3" y="1" width="1" height="1" fill="#FFFFFF"/><rect x="4" y="1" width="1" height="1" fill="#9C9C9C"/><rect x="5" y="1" width="3" height="1" fill="#000"/><rect x="0" y="2" width="1" height="1" fill="#FFFFFF"/><rect x="1" y="2" width="1" height="1" fill="#9C9C9C"/><rect x="2" y="2" width="1" height="1" fill="#FFFFFF"/><rect x="3" y="2" width="1" height="1" fill="#9C9C9C"/><rect x="4" y="2" width="1" height="1" fill="#FFFFFF"/><rect x="5" y="2" width="3" height="1" fill="#000"/><rect x="0" y="3" width="1" height="1" fill="#9C9C9C"/><rect x="1" y="3" width="1" height="1" fill="#FFFFFF"/><rect x="2" y="3" width="1" height="1" fill="#9C9C9C"/><rect x="3" y="3" width="1" height="1" fill="#FFFFFF"/><rect x="4" y="3" width="1" height="1" fill="#9C9C9C"/><rect x="5" y="3" width="3" height="1" fill="#000"/><rect x="0" y="4" width="1" height="1" fill="#FFFFFF"/><rect x="1" y="4" width="1" height="1" fill="#9C9C9C"/><rect x="2" y="4" width="1" height="1" fill="#FFFFFF"/><rect x="3" y="4" width="1" height="1" fill="#9C9C9C"/><rect x="4" y="4" width="1" height="1" fill="#FFFFFF"/><rect x="5" y="4" width="3" height="1" fill="#000"/><rect x="0" y="5" width="1" height="1" fill="#9C9C9C"/><rect x="1" y="5" width="1" height="1" fill="#FFFFFF"/><rect x="2" y="5" width="1" height="1" fill="#9C9C9C"/><rect x="3" y="5" width="1" height="1" fill="#FFFFFF"/><rect x="4" y="5" width="1" height="1" fill="#9C9C9C"/><rect x="5" y="5" width="3" height="1" fill="#000"/><rect x="0" y="6" width="1" height="1" fill="#FFFFFF"/><rect x="1" y="6" width="1" height="1" fill="#9C9C9C"/><rect x="2" y="6" width="1" height="1" fill="#FFFFFF"/><rect x="3" y="6" width="1" height="1" fill="#9C9C9C"/><rect x="4" y="6" width="3" height="1" fill="#FFFFFF"/><rect x="7" y="6" width="1" height="1" fill="#000"/><rect x="0" y="7" width="1" height="1" fill="#9C9C9C"/><rect x="1" y="7" width="1" height="1" fill="#FFFFFF"/><rect x="2" y="7" width="1" height="1" fill="#9C9C9C"/><rect x="3" y="7" width="5" height="1" fill="#000"/><rect x="0" y="8" width="1" height="1" fill="#FFFFFF"/><rect x="1" y="8" width="1" height="1" fill="#9C9C9C"/><rect x="2" y="8" width="1" height="1" fill="#FFFFFF"/><rect x="3" y="8" width="1" height="1" fill="#9C9C9C"/><rect x="4" y="8" width="3" height="1" fill="#FFFFFF"/><rect x="7" y="8" width="1" height="1" fill="#000"/><rect x="0" y="9" width="1" height="1" fill="#9C9C9C"/><rect x="1" y="9" width="1" height="1" fill="#FFFFFF"/><rect x="2" y="9" width="1" height="1" fill="#9C9C9C"/><rect x="3" y="9" width="5" height="1" fill="#000"/><rect x="0" y="10" width="8" height="1" fill="#000"/></svg><span style="left:624px;top:264px;font-size:12px;font-weight:bold;color:#fff;letter-spacing:-0.25px;">[1]Closed : polyglass 33V</span><div style="left:948px;top:266px;width:16px;height:14px;background:#D4D0C8;"></div><div style="left:948px;top:266px;width:15px;height:1px;background:#FFFFFF;"></div><div style="left:948px;top:266px;width:1px;height:13px;background:#FFFFFF;"></div><div style="left:949px;top:278px;width:14px;height:1px;background:#808080;"></div><div style="left:962px;top:267px;width:1px;height:12px;background:#808080;"></div><div style="left:948px;top:279px;width:16px;height:1px;background:#404040;"></div><div style="left:963px;top:266px;width:1px;height:14px;background:#404040;"></div><div style="left:952px;top:275px;width:6px;height:2px;background:#000;"></div><div style="left:964px;top:266px;width:16px;height:14px;background:#D4D0C8;"></div><div style="left:964px;top:266px;width:15px;height:1px;background:#FFFFFF;"></div><div style="left:964px;top:266px;width:1px;height:13px;background:#FFFFFF;"></div><div style="left:965px;top:278px;width:14px;height:1px;background:#808080;"></div><div style="left:978px;top:267px;width:1px;height:12px;background:#808080;"></div><div style="left:964px;top:279px;width:16px;height:1px;background:#404040;"></div><div style="left:979px;top:266px;width:1px;height:14px;background:#404040;"></div><svg style="position:absolute;left:968px;top:269px;" width="10" height="10" viewBox="0 0 10 10" shape-rendering="crispEdges"><rect x="1.5" y="1.5" width="8" height="8" fill="none" stroke="#fff"/><rect x="0.5" y="0.5" width="8" height="8" fill="none" stroke="#808080"/><rect x="0" y="0" width="9" height="2" fill="#808080"/></svg><div style="left:982px;top:266px;width:16px;height:14px;background:#D4D0C8;"></div><div style="left:982px;top:266px;width:15px;height:1px;background:#FFFFFF;"></div><div style="left:982px;top:266px;width:1px;height:13px;background:#FFFFFF;"></div><div style="left:983px;top:278px;width:14px;height:1px;background:#808080;"></div><div style="left:996px;top:267px;width:1px;height:12px;background:#808080;"></div><div style="left:982px;top:279px;width:16px;height:1px;background:#404040;"></div><div style="left:997px;top:266px;width:1px;height:14px;background:#404040;"></div><svg style="position:absolute;left:985px;top:269px;shape-rendering:auto" width="9" height="8" viewBox="0 0 9 8" shape-rendering="crispEdges"><path d="M1 0.5L8 7.5M8 0.5L1 7.5" stroke="#000" stroke-width="1.5" fill="none"/></svg><div style="left:605px;top:303px;width:394px;height:1px;background:#FFFFFF;"></div><div style="left:605px;top:303px;width:1px;height:190px;background:#FFFFFF;"></div><div style="left:606px;top:492px;width:393px;height:1px;background:#808080;"></div><div style="left:998px;top:304px;width:1px;height:189px;background:#808080;"></div><div style="left:605px;top:493px;width:395px;height:1px;background:#404040;"></div><div style="left:999px;top:303px;width:1px;height:191px;background:#404040;"></div><div style="left:608px;top:285px;width:39px;height:1px;background:#FFFFFF;"></div><div style="left:606px;top:287px;width:1px;height:16px;background:#FFFFFF;"></div><div style="left:607px;top:286px;width:1px;height:1px;background:#FFFFFF;"></div><div style="left:647px;top:286px;width:1px;height:17px;background:#808080;"></div><div style="left:648px;top:287px;width:1px;height:16px;background:#404040;"></div><span style="left:613px;top:285px;font-size:11px;font-weight:normal;color:#000;letter-spacing:-0.2px;">Driver</span><div style="left:651px;top:285px;width:37px;height:1px;background:#FFFFFF;"></div><div style="left:649px;top:287px;width:1px;height:16px;background:#FFFFFF;"></div><div style="left:650px;top:286px;width:1px;height:1px;background:#FFFFFF;"></div><div style="left:688px;top:286px;width:1px;height:17px;background:#808080;"></div><div style="left:689px;top:287px;width:1px;height:16px;background:#404040;"></div><span style="left:655px;top:285px;font-size:11px;font-weight:normal;color:#000;letter-spacing:-0.2px;">Box</span><div style="left:777px;top:285px;width:50px;height:1px;background:#FFFFFF;"></div><div style="left:775px;top:287px;width:1px;height:16px;background:#FFFFFF;"></div><div style="left:776px;top:286px;width:1px;height:1px;background:#FFFFFF;"></div><div style="left:827px;top:286px;width:1px;height:17px;background:#808080;"></div><div style="left:828px;top:287px;width:1px;height:16px;background:#404040;"></div><span style="left:781px;top:285px;font-size:11px;font-weight:normal;color:#000;letter-spacing:-0.2px;">EQ/Filter</span><div style="left:831px;top:285px;width:42px;height:1px;background:#FFFFFF;"></div><div style="left:829px;top:287px;width:1px;height:16px;background:#FFFFFF;"></div><div style="left:830px;top:286px;width:1px;height:1px;background:#FFFFFF;"></div><div style="left:873px;top:286px;width:1px;height:17px;background:#808080;"></div><div style="left:874px;top:287px;width:1px;height:16px;background:#404040;"></div><span style="left:835px;top:285px;font-size:11px;font-weight:normal;color:#000;letter-spacing:-0.2px;">Project</span><div style="left:737px;top:285px;width:36px;height:1px;background:#FFFFFF;"></div><div style="left:735px;top:287px;width:1px;height:16px;background:#FFFFFF;"></div><div style="left:736px;top:286px;width:1px;height:1px;background:#FFFFFF;"></div><div style="left:773px;top:286px;width:1px;height:17px;background:#808080;"></div><div style="left:774px;top:287px;width:1px;height:16px;background:#404040;"></div><span style="left:739px;top:285px;font-size:11px;font-weight:normal;color:#000;letter-spacing:-0.2px;">Signal</span><div style="left:689px;top:282px;width:46px;height:23px;background:#D4D0C8;"></div><div style="left:691px;top:282px;width:42px;height:1px;background:#FFFFFF;"></div><div style="left:689px;top:284px;width:1px;height:21px;background:#FFFFFF;"></div><div style="left:690px;top:283px;width:1px;height:1px;background:#FFFFFF;"></div><div style="left:733px;top:283px;width:1px;height:21px;background:#808080;"></div><div style="left:734px;top:284px;width:1px;height:20px;background:#404040;"></div><span style="left:697px;top:283px;font-size:11px;font-weight:normal;color:#000;letter-spacing:-0.2px;">Plot</span><div style="left:690px;top:303px;width:43px;height:1px;background:#D4D0C8;"></div><div style="left:614px;top:312px;width:378px;height:15px;background:#D4D0C8;"></div><div style="left:614px;top:312px;width:377px;height:1px;background:#FFFFFF;"></div><div style="left:614px;top:312px;width:1px;height:14px;background:#FFFFFF;"></div><div style="left:614px;top:326px;width:378px;height:1px;background:#808080;"></div><div style="left:991px;top:312px;width:1px;height:15px;background:#808080;"></div><span style="left:503px;width:600px;text-align:center;top:310px;font-size:11px;font-weight:normal;color:#000;letter-spacing:-0.2px;">Environment</span><span style="left:615px;top:329px;font-size:11px;font-weight:normal;color:#000;letter-spacing:-0.25px;">Temperature</span><span style="left:730px;top:329px;font-size:11px;font-weight:normal;color:#000;letter-spacing:-0.3px;">Relative humidity:</span><span style="left:846px;top:329px;font-size:11px;font-weight:normal;color:#000;letter-spacing:-0.35px;">Air pressure:</span><div style="left:615px;top:347px;width:85px;height:19px;background:#FFFFFF;"></div><div style="left:615px;top:347px;width:85px;height:1px;background:#888888;"></div><div style="left:615px;top:347px;width:1px;height:19px;background:#888888;"></div><div style="left:615px;top:365px;width:85px;height:1px;background:#C4C4C0;"></div><div style="left:699px;top:347px;width:1px;height:19px;background:#C4C4C0;"></div><div style="left:617px;top:350px;width:29px;height:13px;background:#0A246A;"></div><span style="left:618px;top:347px;font-size:11px;font-weight:normal;color:#fff;letter-spacing:-0.35px;">20,00</span><span style="left:703px;top:349px;font-size:11px;font-weight:normal;color:#000;letter-spacing:-0.2px;">°C</span><div style="left:730px;top:347px;width:86px;height:19px;background:#FFFFFF;"></div><div style="left:730px;top:347px;width:86px;height:1px;background:#888888;"></div><div style="left:730px;top:347px;width:1px;height:19px;background:#888888;"></div><div style="left:730px;top:365px;width:86px;height:1px;background:#C4C4C0;"></div><div style="left:815px;top:347px;width:1px;height:19px;background:#C4C4C0;"></div><span style="left:733px;top:347px;font-size:11px;font-weight:normal;color:#000;letter-spacing:-0.3px;">30,0000</span><span style="left:819px;top:349px;font-size:11px;font-weight:normal;color:#000;letter-spacing:-0.2px;">%</span><div style="left:846px;top:347px;width:86px;height:19px;background:#FFFFFF;"></div><div style="left:846px;top:347px;width:86px;height:1px;background:#888888;"></div><div style="left:846px;top:347px;width:1px;height:19px;background:#888888;"></div><div style="left:846px;top:365px;width:86px;height:1px;background:#C4C4C0;"></div><div style="left:931px;top:347px;width:1px;height:19px;background:#C4C4C0;"></div><span style="left:849px;top:347px;font-size:11px;font-weight:normal;color:#000;letter-spacing:-0.4px;">101325,0</span><span style="left:935px;top:349px;font-size:11px;font-weight:normal;color:#000;letter-spacing:-0.2px;">Pa</span><svg style="position:absolute;left:624px;top:376px;" width="22" height="9" viewBox="0 0 22 9" shape-rendering="crispEdges"><rect x="17" y="0" width="1" height="1" fill="#000"/><rect x="17" y="1" width="2" height="1" fill="#000"/><rect x="18" y="2" width="2" height="1" fill="#000"/><rect x="19" y="3" width="2" height="1" fill="#000"/><rect x="0" y="4" width="4" height="1" fill="#000"/><rect x="5" y="4" width="3" height="1" fill="#000"/><rect x="9" y="4" width="3" height="1" fill="#000"/><rect x="13" y="4" width="3" height="1" fill="#000"/><rect x="19" y="4" width="2" height="1" fill="#000"/><rect x="19" y="5" width="2" height="1" fill="#000"/><rect x="18" y="6" width="2" height="1" fill="#000"/><rect x="17" y="7" width="2" height="1" fill="#000"/><rect x="17" y="8" width="1" height="1" fill="#000"/></svg><span style="left:618px;top:388px;font-size:11px;font-weight:normal;color:#000;letter-spacing:-0.35px;">Sound velocity:</span><span style="left:730px;top:389px;font-size:11px;font-weight:normal;color:#000;letter-spacing:-0.3px;">Air density:</span><div style="left:618px;top:407px;width:79px;height:18px;background:#D4D0C8;"></div><div style="left:618px;top:407px;width:79px;height:1px;background:#808080;"></div><div style="left:618px;top:407px;width:1px;height:18px;background:#808080;"></div><div style="left:618px;top:424px;width:79px;height:1px;background:#FFFFFF;"></div><div style="left:696px;top:407px;width:1px;height:18px;background:#FFFFFF;"></div><span style="left:619px;top:407px;font-size:11px;font-weight:normal;color:#000;letter-spacing:-0.3px;">343,68</span><span style="left:700px;top:409px;font-size:11px;font-weight:normal;color:#000;letter-spacing:-0.2px;">m/s</span><div style="left:730px;top:407px;width:86px;height:18px;background:#D4D0C8;"></div><div style="left:730px;top:407px;width:86px;height:1px;background:#808080;"></div><div style="left:730px;top:407px;width:1px;height:18px;background:#808080;"></div><div style="left:730px;top:424px;width:86px;height:1px;background:#FFFFFF;"></div><div style="left:815px;top:407px;width:1px;height:18px;background:#FFFFFF;"></div><span style="left:732px;top:407px;font-size:11px;font-weight:normal;color:#000;letter-spacing:-0.3px;">1,20095</span><span style="left:819px;top:409px;font-size:11px;font-weight:normal;color:#000;letter-spacing:-0.3px;">kg/m^3</span><div style="left:614px;top:437px;width:378px;height:16px;background:#D4D0C8;"></div><div style="left:614px;top:437px;width:377px;height:1px;background:#FFFFFF;"></div><div style="left:614px;top:437px;width:1px;height:15px;background:#FFFFFF;"></div><div style="left:614px;top:452px;width:378px;height:1px;background:#808080;"></div><div style="left:991px;top:437px;width:1px;height:16px;background:#808080;"></div><span style="left:503px;width:600px;text-align:center;top:435px;font-size:11px;font-weight:normal;color:#000;letter-spacing:-0.2px;">Line</span><span style="left:617px;top:465px;font-size:11px;font-weight:normal;color:#000;letter-spacing:-0.3px;">Color:</span><div style="left:647px;top:462px;width:63px;height:19px;background:#FFFF00;"></div><div style="left:647px;top:462px;width:62px;height:1px;background:#FFFFA0;"></div><div style="left:647px;top:462px;width:1px;height:18px;background:#FFFFA0;"></div><div style="left:647px;top:480px;width:63px;height:1px;background:#6A6A20;"></div><div style="left:709px;top:462px;width:1px;height:19px;background:#6A6A20;"></div><span style="left:378px;width:600px;text-align:center;top:462px;font-size:11px;font-weight:normal;color:#000;letter-spacing:-0.3px;">Change</span><span style="left:792px;top:463px;font-size:11px;font-weight:normal;color:#000;letter-spacing:-0.3px;">Width:</span><div style="left:829px;top:462px;width:71px;height:21px;background:#FFFFFF;"></div><div style="left:829px;top:462px;width:71px;height:1px;background:#888888;"></div><div style="left:829px;top:462px;width:1px;height:21px;background:#888888;"></div><div style="left:829px;top:482px;width:71px;height:1px;background:#C4C4C0;"></div><div style="left:899px;top:462px;width:1px;height:21px;background:#C4C4C0;"></div><span style="left:833px;top:462px;font-size:11px;font-weight:normal;color:#000;">1</span><div style="left:886px;top:463px;width:13px;height:19px;background:#D4D0C8;"></div><div style="left:886px;top:463px;width:13px;height:1px;background:#FFFFFF;"></div><div style="left:886px;top:463px;width:1px;height:19px;background:#808080;"></div><div style="left:886px;top:481px;width:13px;height:1px;background:#808080;"></div><div style="left:898px;top:463px;width:1px;height:19px;background:#808080;"></div><svg style="position:absolute;left:889px;top:471px;shape-rendering:auto" width="5" height="3" viewBox="0 0 5 3" shape-rendering="crispEdges"><path d="M0 0h5L2.5 3z" fill="#000"/></svg><div style="left:605px;top:495px;width:155px;height:12px;background:#D4D0C8;"></div><div style="left:605px;top:495px;width:155px;height:1px;background:#808080;"></div><div style="left:605px;top:495px;width:1px;height:12px;background:#808080;"></div><div style="left:605px;top:506px;width:155px;height:1px;background:#FFFFFF;"></div><span style="left:382px;width:600px;text-align:center;top:491px;font-size:9px;font-weight:bold;color:#000;letter-spacing:0.55px;font-family:Liberation Serif,serif;">Parameters</span><div style="left:760px;top:495px;width:239px;height:12px;background:#FFFF00;"></div><div style="left:760px;top:506px;width:239px;height:1px;background:#C8C860;"></div><span style="left:617px;top:512px;font-size:11px;font-weight:normal;color:#000;letter-spacing:-0.3px;">Qts:</span><div style="left:649px;top:515px;width:49px;height:13px;background:#D4D0C8;"></div><div style="left:649px;top:515px;width:49px;height:1px;background:#808080;"></div><div style="left:649px;top:515px;width:1px;height:13px;background:#808080;"></div><div style="left:649px;top:527px;width:49px;height:1px;background:#FFFFFF;"></div><div style="left:697px;top:515px;width:1px;height:13px;background:#FFFFFF;"></div><span style="left:373px;width:600px;text-align:center;top:512px;font-size:11px;font-weight:normal;color:#000;letter-spacing:-0.3px;">0,482</span><span style="left:701px;top:512px;font-size:11px;font-weight:normal;color:#000;letter-spacing:-0.3px;"></span><span style="left:617px;top:528px;font-size:11px;font-weight:normal;color:#000;letter-spacing:-0.3px;">Vas:</span><div style="left:649px;top:531px;width:49px;height:13px;background:#D4D0C8;"></div><div style="left:649px;top:531px;width:49px;height:1px;background:#808080;"></div><div style="left:649px;top:531px;width:1px;height:13px;background:#808080;"></div><div style="left:649px;top:543px;width:49px;height:1px;background:#FFFFFF;"></div><div style="left:697px;top:531px;width:1px;height:13px;background:#FFFFFF;"></div><span style="left:373px;width:600px;text-align:center;top:528px;font-size:11px;font-weight:normal;color:#000;letter-spacing:-0.3px;">129,96</span><span style="left:701px;top:528px;font-size:11px;font-weight:normal;color:#000;letter-spacing:-0.3px;">l</span><span style="left:617px;top:544px;font-size:11px;font-weight:normal;color:#000;letter-spacing:-0.3px;">Fs:</span><div style="left:649px;top:547px;width:49px;height:13px;background:#D4D0C8;"></div><div style="left:649px;top:547px;width:49px;height:1px;background:#808080;"></div><div style="left:649px;top:547px;width:1px;height:13px;background:#808080;"></div><div style="left:649px;top:559px;width:49px;height:1px;background:#FFFFFF;"></div><div style="left:697px;top:547px;width:1px;height:13px;background:#FFFFFF;"></div><span style="left:373px;width:600px;text-align:center;top:544px;font-size:11px;font-weight:normal;color:#000;letter-spacing:-0.3px;">25,20</span><span style="left:701px;top:544px;font-size:11px;font-weight:normal;color:#000;letter-spacing:-0.3px;">Hz</span><span style="left:617px;top:560px;font-size:11px;font-weight:normal;color:#000;letter-spacing:-0.3px;">Re:</span><div style="left:649px;top:563px;width:49px;height:13px;background:#D4D0C8;"></div><div style="left:649px;top:563px;width:49px;height:1px;background:#808080;"></div><div style="left:649px;top:563px;width:1px;height:13px;background:#808080;"></div><div style="left:649px;top:575px;width:49px;height:1px;background:#FFFFFF;"></div><div style="left:697px;top:563px;width:1px;height:13px;background:#FFFFFF;"></div><span style="left:373px;width:600px;text-align:center;top:560px;font-size:11px;font-weight:normal;color:#000;letter-spacing:-0.3px;">2,600</span><span style="left:701px;top:560px;font-size:11px;font-weight:normal;color:#000;letter-spacing:-0.3px;">ohm</span><span style="left:617px;top:576px;font-size:11px;font-weight:normal;color:#000;letter-spacing:-0.3px;">Le:</span><div style="left:649px;top:579px;width:49px;height:13px;background:#D4D0C8;"></div><div style="left:649px;top:579px;width:49px;height:1px;background:#808080;"></div><div style="left:649px;top:579px;width:1px;height:13px;background:#808080;"></div><div style="left:649px;top:591px;width:49px;height:1px;background:#FFFFFF;"></div><div style="left:697px;top:579px;width:1px;height:13px;background:#FFFFFF;"></div><span style="left:373px;width:600px;text-align:center;top:576px;font-size:11px;font-weight:normal;color:#000;letter-spacing:-0.3px;">0,00</span><span style="left:701px;top:576px;font-size:11px;font-weight:normal;color:#000;letter-spacing:-0.3px;">mH</span><span style="left:617px;top:592px;font-size:11px;font-weight:normal;color:#000;letter-spacing:-0.3px;">Xmax:</span><div style="left:649px;top:595px;width:49px;height:13px;background:#D4D0C8;"></div><div style="left:649px;top:595px;width:49px;height:1px;background:#808080;"></div><div style="left:649px;top:595px;width:1px;height:13px;background:#808080;"></div><div style="left:649px;top:607px;width:49px;height:1px;background:#FFFFFF;"></div><div style="left:697px;top:595px;width:1px;height:13px;background:#FFFFFF;"></div><span style="left:373px;width:600px;text-align:center;top:592px;font-size:11px;font-weight:normal;color:#000;letter-spacing:-0.3px;">12,0</span><span style="left:701px;top:592px;font-size:11px;font-weight:normal;color:#000;letter-spacing:-0.3px;">mm</span><span style="left:617px;top:608px;font-size:11px;font-weight:normal;color:#000;letter-spacing:-0.3px;">Z:</span><div style="left:649px;top:611px;width:49px;height:13px;background:#D4D0C8;"></div><div style="left:649px;top:611px;width:49px;height:1px;background:#808080;"></div><div style="left:649px;top:611px;width:1px;height:13px;background:#808080;"></div><div style="left:649px;top:623px;width:49px;height:1px;background:#FFFFFF;"></div><div style="left:697px;top:611px;width:1px;height:13px;background:#FFFFFF;"></div><span style="left:373px;width:600px;text-align:center;top:608px;font-size:11px;font-weight:normal;color:#000;letter-spacing:-0.3px;">4,000</span><span style="left:701px;top:608px;font-size:11px;font-weight:normal;color:#000;letter-spacing:-0.3px;">ohm</span><span style="left:757px;top:512px;font-size:11px;font-weight:normal;color:#000;letter-spacing:-0.3px;">Qms:</span><div style="left:789px;top:515px;width:49px;height:13px;background:#D4D0C8;"></div><div style="left:789px;top:515px;width:49px;height:1px;background:#808080;"></div><div style="left:789px;top:515px;width:1px;height:13px;background:#808080;"></div><div style="left:789px;top:527px;width:49px;height:1px;background:#FFFFFF;"></div><div style="left:837px;top:515px;width:1px;height:13px;background:#FFFFFF;"></div><span style="left:513px;width:600px;text-align:center;top:512px;font-size:11px;font-weight:normal;color:#000;letter-spacing:-0.45px;">13,390</span><span style="left:841px;top:512px;font-size:11px;font-weight:normal;color:#000;letter-spacing:-0.3px;"></span><span style="left:757px;top:528px;font-size:11px;font-weight:normal;color:#000;letter-spacing:-0.3px;">Qes:</span><div style="left:789px;top:531px;width:49px;height:13px;background:#D4D0C8;"></div><div style="left:789px;top:531px;width:49px;height:1px;background:#808080;"></div><div style="left:789px;top:531px;width:1px;height:13px;background:#808080;"></div><div style="left:789px;top:543px;width:49px;height:1px;background:#FFFFFF;"></div><div style="left:837px;top:531px;width:1px;height:13px;background:#FFFFFF;"></div><span style="left:513px;width:600px;text-align:center;top:528px;font-size:11px;font-weight:normal;color:#000;letter-spacing:-0.45px;">0,500</span><span style="left:841px;top:528px;font-size:11px;font-weight:normal;color:#000;letter-spacing:-0.3px;"></span><span style="left:757px;top:544px;font-size:11px;font-weight:normal;color:#000;letter-spacing:-0.3px;">SPL:</span><div style="left:789px;top:547px;width:49px;height:13px;background:#D4D0C8;"></div><div style="left:789px;top:547px;width:49px;height:1px;background:#808080;"></div><div style="left:789px;top:547px;width:1px;height:13px;background:#808080;"></div><div style="left:789px;top:559px;width:49px;height:1px;background:#FFFFFF;"></div><div style="left:837px;top:547px;width:1px;height:13px;background:#FFFFFF;"></div><span style="left:513px;width:600px;text-align:center;top:544px;font-size:11px;font-weight:normal;color:#000;letter-spacing:-0.45px;">88,22</span><span style="left:841px;top:544px;font-size:11px;font-weight:normal;color:#000;letter-spacing:-0.3px;">dB</span><span style="left:757px;top:560px;font-size:11px;font-weight:normal;color:#000;letter-spacing:-0.3px;">Pe:</span><div style="left:789px;top:563px;width:49px;height:13px;background:#D4D0C8;"></div><div style="left:789px;top:563px;width:49px;height:1px;background:#808080;"></div><div style="left:789px;top:563px;width:1px;height:13px;background:#808080;"></div><div style="left:789px;top:575px;width:49px;height:1px;background:#FFFFFF;"></div><div style="left:837px;top:563px;width:1px;height:13px;background:#FFFFFF;"></div><span style="left:513px;width:600px;text-align:center;top:560px;font-size:11px;font-weight:normal;color:#000;letter-spacing:-0.45px;">300,0</span><span style="left:841px;top:560px;font-size:11px;font-weight:normal;color:#000;letter-spacing:-0.3px;">W</span><span style="left:757px;top:576px;font-size:11px;font-weight:normal;color:#000;letter-spacing:-0.3px;">BL:</span><div style="left:789px;top:579px;width:49px;height:13px;background:#D4D0C8;"></div><div style="left:789px;top:579px;width:49px;height:1px;background:#808080;"></div><div style="left:789px;top:579px;width:1px;height:13px;background:#808080;"></div><div style="left:789px;top:591px;width:49px;height:1px;background:#FFFFFF;"></div><div style="left:837px;top:579px;width:1px;height:13px;background:#FFFFFF;"></div><span style="left:513px;width:600px;text-align:center;top:576px;font-size:11px;font-weight:normal;color:#000;letter-spacing:-0.45px;">10,03472</span><span style="left:841px;top:576px;font-size:11px;font-weight:normal;color:#000;letter-spacing:-0.3px;">N/A</span><span style="left:757px;top:592px;font-size:11px;font-weight:normal;color:#000;letter-spacing:-0.3px;">Dd:</span><div style="left:789px;top:595px;width:49px;height:13px;background:#D4D0C8;"></div><div style="left:789px;top:595px;width:49px;height:1px;background:#808080;"></div><div style="left:789px;top:595px;width:1px;height:13px;background:#808080;"></div><div style="left:789px;top:607px;width:49px;height:1px;background:#FFFFFF;"></div><div style="left:837px;top:595px;width:1px;height:13px;background:#FFFFFF;"></div><span style="left:513px;width:600px;text-align:center;top:592px;font-size:11px;font-weight:normal;color:#000;letter-spacing:-0.45px;">25,98</span><span style="left:841px;top:592px;font-size:11px;font-weight:normal;color:#000;letter-spacing:-0.3px;">cm</span><span style="left:757px;top:608px;font-size:11px;font-weight:normal;color:#000;letter-spacing:-0.3px;">Sd:</span><div style="left:789px;top:611px;width:49px;height:13px;background:#D4D0C8;"></div><div style="left:789px;top:611px;width:49px;height:1px;background:#808080;"></div><div style="left:789px;top:611px;width:1px;height:13px;background:#808080;"></div><div style="left:789px;top:623px;width:49px;height:1px;background:#FFFFFF;"></div><div style="left:837px;top:611px;width:1px;height:13px;background:#FFFFFF;"></div><span style="left:513px;width:600px;text-align:center;top:608px;font-size:11px;font-weight:normal;color:#000;letter-spacing:-0.45px;">530,0</span><span style="left:841px;top:608px;font-size:11px;font-weight:normal;color:#000;letter-spacing:-0.3px;">cm^2</span>
</div></body></html>
